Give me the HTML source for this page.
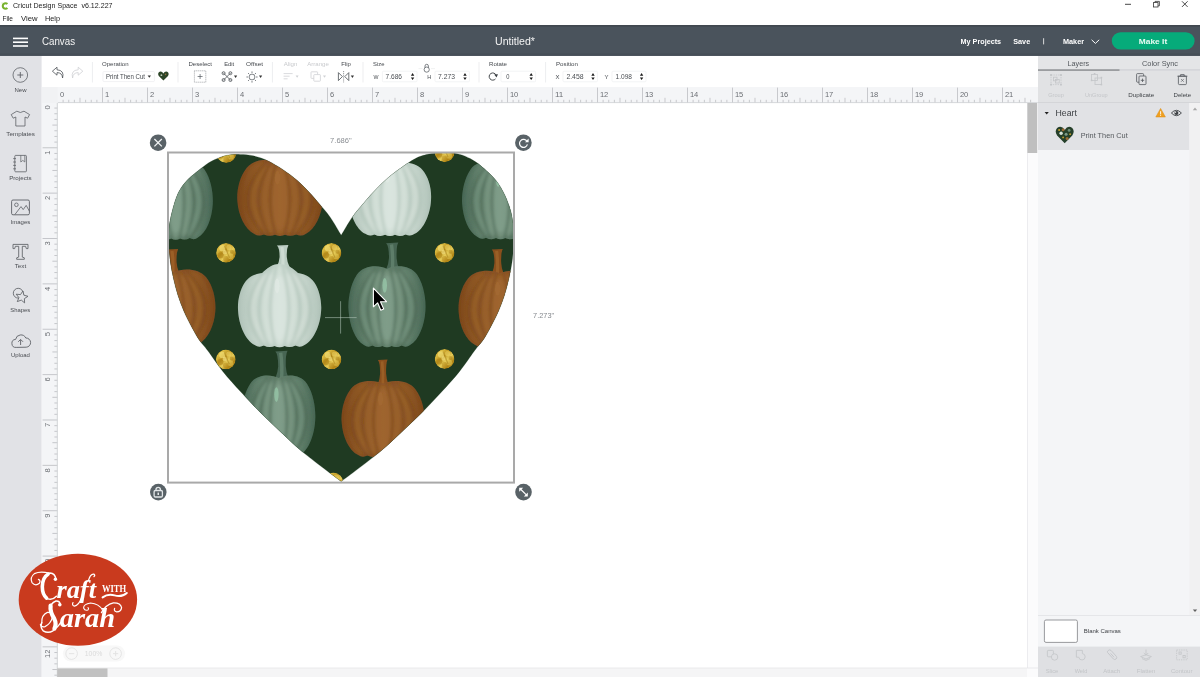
<!DOCTYPE html>
<html><head><meta charset="utf-8"><title>Cricut Design Space</title>
<style>
html,body{margin:0;padding:0;background:#fff;overflow:hidden}
body{width:1200px;height:677px;font-family:"Liberation Sans", sans-serif;}
svg{display:block;font-family:"Liberation Sans", sans-serif;will-change:transform;}
text{white-space:pre}
</style></head><body>
<svg width="1200" height="677" viewBox="0 0 1200 677">
<defs>
<clipPath id="hc"><path d="M341.2 235.2 C343.0 232.2 348.4 222.7 352.2 217.2 C356.0 211.7 359.9 207.4 364.2 202.4 C368.5 197.4 373.4 191.8 378.2 187.0 C383.0 182.2 387.3 178.2 393.2 173.6 C399.1 169.0 408.0 162.8 413.5 159.6 C419.0 156.4 422.2 155.7 426.2 154.6 C430.1 153.5 433.5 153.2 437.2 152.9 C440.9 152.6 444.4 152.3 448.2 152.6 C452.0 152.8 456.3 153.4 460.0 154.4 C463.7 155.4 466.7 156.7 470.2 158.6 C473.7 160.5 476.5 162.2 480.8 165.8 C485.1 169.4 492.0 175.5 496.0 180.4 C500.0 185.3 502.6 190.4 505.0 195.4 C507.4 200.4 509.3 206.1 510.6 210.5 C511.9 214.9 512.3 218.4 512.8 222.0 C513.3 225.6 513.5 228.0 513.6 232.0 C513.7 236.0 513.9 240.9 513.6 246.0 C513.3 251.1 512.8 257.0 512.0 262.5 C511.2 268.0 510.1 273.4 508.9 278.8 C507.7 284.2 506.3 289.6 504.6 295.0 C502.9 300.4 500.9 305.8 498.5 311.3 C496.1 316.8 492.8 323.2 490.2 328.0 C487.6 332.8 485.8 336.2 483.2 340.0 C480.6 343.8 478.5 345.5 474.6 350.7 C470.7 355.9 465.1 364.5 459.6 371.4 C454.1 378.3 447.8 385.1 441.5 392.0 C435.2 398.9 428.8 405.8 421.9 412.7 C415.0 419.6 407.6 426.5 400.2 433.4 C392.8 440.3 387.0 446.1 377.2 454.1 C367.4 462.1 347.2 477.0 341.2 481.6 L341.2 481.6 C335.2 477.0 315.0 462.1 305.2 454.1 C295.4 446.1 289.6 440.3 282.2 433.4 C274.8 426.5 267.4 419.6 260.5 412.7 C253.6 405.8 247.2 398.9 240.9 392.0 C234.6 385.1 228.3 378.3 222.8 371.4 C217.3 364.5 211.7 355.9 207.8 350.7 C203.9 345.5 201.8 343.8 199.2 340.0 C196.6 336.2 194.8 332.8 192.2 328.0 C189.6 323.2 186.3 316.8 183.9 311.3 C181.5 305.8 179.5 300.4 177.8 295.0 C176.1 289.6 174.7 284.2 173.5 278.8 C172.3 273.4 171.2 268.0 170.4 262.5 C169.6 257.0 169.1 251.1 168.8 246.0 C168.5 240.9 168.5 236.5 168.8 232.0 C169.1 227.5 169.1 224.8 170.4 218.9 C171.7 213.0 174.1 202.9 176.6 196.7 C179.1 190.5 181.3 186.8 185.6 181.9 C189.9 177.0 197.8 170.9 202.6 167.2 C207.4 163.5 210.1 161.8 214.2 159.8 C218.3 157.8 222.9 156.1 227.2 155.2 C231.5 154.3 235.9 154.3 240.2 154.4 C244.5 154.5 248.4 154.6 253.2 155.8 C258.0 157.0 263.2 158.4 269.2 161.4 C275.2 164.4 283.4 169.7 289.2 174.0 C295.0 178.3 299.4 182.3 304.2 187.0 C309.0 191.7 313.9 197.4 318.2 202.4 C322.5 207.4 326.4 211.7 330.2 217.2 C334.0 222.7 339.4 232.2 341.2 235.2 Z"/></clipPath>
<linearGradient id="gO" x1="0" x2="1" y1="0" y2="0"><stop offset="0" stop-color="#7f4a1c"/><stop offset=".22" stop-color="#8f5825"/><stop offset=".5" stop-color="#985f2a"/><stop offset=".78" stop-color="#8f5825"/><stop offset="1" stop-color="#7f4a1c"/></linearGradient>
<linearGradient id="gW" x1="0" x2="1" y1="0" y2="0"><stop offset="0" stop-color="#b3c5bb"/><stop offset=".22" stop-color="#c6d5cc"/><stop offset=".5" stop-color="#d2dfd7"/><stop offset=".78" stop-color="#c6d5cc"/><stop offset="1" stop-color="#b3c5bb"/></linearGradient>
<linearGradient id="gG" x1="0" x2="1" y1="0" y2="0"><stop offset="0" stop-color="#4c6a58"/><stop offset=".22" stop-color="#62806c"/><stop offset=".5" stop-color="#73907b"/><stop offset=".78" stop-color="#62806c"/><stop offset="1" stop-color="#4c6a58"/></linearGradient>
<linearGradient id="gold" x1="0" y1="0" x2="1" y2="1"><stop offset="0" stop-color="#b58a1a"/><stop offset=".22" stop-color="#dcbc42"/><stop offset=".4" stop-color="#bd9420"/><stop offset=".58" stop-color="#e6cc58"/><stop offset=".76" stop-color="#b08416"/><stop offset="1" stop-color="#cfa92e"/></linearGradient>
<filter id="soft" x="-10%" y="-10%" width="120%" height="120%"><feGaussianBlur stdDeviation="0.55"/></filter>
<filter id="soft2" x="-30%" y="-10%" width="160%" height="120%"><feGaussianBlur stdDeviation="1.7"/></filter>
<clipPath id="pk1"><path d="M175.7 164.2 C167.6 160.3 153.5 160.3 146.8 169.8 C139.8 180.1 138.0 195.1 138.7 204.5 C139.4 218.0 145.0 233.0 153.5 237.5 Q157.2 240.5 161.6 238.1 Q166.8 240.9 171.3 238.5 Q175.7 240.9 180.1 238.5 Q184.6 240.9 189.8 238.1 Q194.2 240.5 197.9 237.5 C206.4 233.0 212.0 218.0 212.7 204.5 C213.4 195.1 211.6 180.1 204.6 169.8 C197.9 160.3 183.8 160.3 175.7 164.2 Z"/></clipPath>
<clipPath id="pk2"><path d="M280.0 162.3 C270.6 158.4 254.4 158.4 246.8 167.7 C238.7 177.7 236.5 192.4 237.4 201.6 C238.3 214.8 244.6 229.4 254.4 233.9 Q258.7 236.8 263.8 234.4 Q269.8 237.1 274.9 234.8 Q280.0 237.1 285.1 234.8 Q290.2 237.1 296.2 234.4 Q301.3 236.8 305.6 233.9 C315.4 229.4 321.7 214.8 322.6 201.6 C323.5 192.4 321.3 177.7 313.2 167.7 C305.6 158.4 289.4 158.4 280.0 162.3 Z"/></clipPath>
<clipPath id="pk3"><path d="M390.0 154.0 C381.8 154.0 377.7 158.8 372.8 162.8 C366.2 163.6 359.7 166.0 355.6 172.4 C350.6 179.6 348.2 190.8 349.0 200.4 C349.8 214.0 356.0 229.2 365.4 233.8 Q369.5 236.8 374.4 234.4 Q380.2 237.2 385.1 234.8 Q390.0 237.2 394.9 234.8 Q399.8 237.2 405.6 234.4 Q410.5 236.8 414.6 233.8 C424.0 229.2 430.2 214.0 431.0 200.4 C431.8 190.8 429.4 179.6 424.4 172.4 C420.3 166.0 413.8 163.6 408.0 162.8 C403.1 158.8 398.2 154.0 390.0 154.0 Z"/></clipPath>
<clipPath id="pk4"><path d="M500.6 163.8 C492.2 159.9 477.6 159.9 470.6 169.4 C463.4 179.7 461.4 194.7 462.2 204.1 C463.0 217.6 468.7 232.6 477.6 237.1 Q481.4 240.1 486.0 237.7 Q491.4 240.5 496.0 238.1 Q500.6 240.5 505.2 238.1 Q509.8 240.5 515.2 237.7 Q519.8 240.1 523.6 237.1 C532.5 232.6 538.2 217.6 539.0 204.1 C539.8 194.7 537.8 179.7 530.6 169.4 C523.6 159.9 509.0 159.9 500.6 163.8 Z"/></clipPath>
<clipPath id="pk5"><path d="M174.0 271.9 C164.9 268.0 149.2 268.0 141.8 277.3 C133.9 287.3 131.9 302.0 132.7 311.2 C133.5 324.4 139.7 339.0 149.2 343.5 Q153.3 346.4 158.3 344.0 Q164.1 346.7 169.0 344.4 Q174.0 346.7 179.0 344.4 Q183.9 346.7 189.7 344.0 Q194.7 346.4 198.8 343.5 C208.3 339.0 214.5 324.4 215.3 311.2 C216.1 302.0 214.1 287.3 206.2 277.3 C198.8 268.0 183.1 268.0 174.0 271.9 Z"/></clipPath>
<clipPath id="pk6"><path d="M279.6 264.0 C271.3 264.0 267.2 268.8 262.2 272.9 C255.5 273.7 248.9 276.2 244.7 282.7 C239.8 290.0 237.3 301.3 238.1 311.1 C238.9 324.9 245.2 340.3 254.7 345.0 Q258.9 348.0 263.8 345.6 Q269.6 348.4 274.6 346.0 Q279.6 348.4 284.6 346.0 Q289.6 348.4 295.4 345.6 Q300.4 348.0 304.5 345.0 C314.0 340.3 320.3 324.9 321.1 311.1 C321.9 301.3 319.4 290.0 314.5 282.7 C310.3 276.2 303.7 273.7 297.9 272.9 C292.9 268.8 287.9 264.0 279.6 264.0 Z"/></clipPath>
<clipPath id="pk7"><path d="M387.0 268.9 C378.6 264.8 364.0 264.8 357.0 274.6 C349.8 285.3 347.8 300.9 348.6 310.7 C349.4 324.7 355.1 340.2 364.0 345.0 Q367.8 348.0 372.4 345.6 Q377.8 348.4 382.4 346.0 Q387.0 348.4 391.6 346.0 Q396.2 348.4 401.6 345.6 Q406.2 348.0 410.0 345.0 C418.9 340.2 424.6 324.7 425.4 310.7 C426.2 300.9 424.2 285.3 417.0 274.6 C410.0 264.8 395.4 264.8 387.0 268.9 Z"/></clipPath>
<clipPath id="pk8"><path d="M500.0 273.3 C490.9 269.4 475.2 269.4 467.8 278.7 C459.9 288.7 457.9 303.4 458.7 312.6 C459.5 325.8 465.7 340.4 475.2 344.9 Q479.4 347.8 484.3 345.4 Q490.1 348.1 495.0 345.8 Q500.0 348.1 505.0 345.8 Q509.9 348.1 515.7 345.4 Q520.6 347.8 524.8 344.9 C534.3 340.4 540.5 325.8 541.3 312.6 C542.1 303.4 540.1 288.7 532.2 278.7 C524.8 269.4 509.1 269.4 500.0 273.3 Z"/></clipPath>
<clipPath id="pk9"><path d="M278.6 378.1 C270.5 374.0 256.6 374.0 250.1 383.9 C243.1 394.6 241.3 410.3 242.0 420.1 C242.7 434.2 248.2 449.8 256.6 454.5 Q260.3 457.6 264.7 455.2 Q269.8 458.0 274.2 455.6 Q278.6 458.0 283.0 455.6 Q287.4 458.0 292.5 455.2 Q296.9 457.6 300.6 454.5 C309.0 449.8 314.5 434.2 315.2 420.1 C315.9 410.3 314.1 394.6 307.1 383.9 C300.6 374.0 286.7 374.0 278.6 378.1 Z"/></clipPath>
<clipPath id="pk10"><path d="M383.0 383.5 C373.9 379.6 358.2 379.6 350.8 388.9 C342.9 398.9 340.9 413.6 341.7 422.8 C342.5 436.0 348.7 450.6 358.2 455.1 Q362.4 458.0 367.3 455.6 Q373.1 458.3 378.0 456.0 Q383.0 458.3 388.0 456.0 Q392.9 458.3 398.7 455.6 Q403.6 458.0 407.8 455.1 C417.3 450.6 423.5 436.0 424.3 422.8 C425.1 413.6 423.1 398.9 415.2 388.9 C407.8 379.6 392.1 379.6 383.0 383.5 Z"/></clipPath>
<clipPath id="dc11"><circle cx="226.2" cy="152.8" r="10.2"/></clipPath>
<clipPath id="dc12"><circle cx="444.6" cy="152.2" r="10"/></clipPath>
<clipPath id="dc13"><circle cx="226" cy="252.8" r="9.9"/></clipPath>
<clipPath id="dc14"><circle cx="331.5" cy="252.8" r="9.9"/></clipPath>
<clipPath id="dc15"><circle cx="444.6" cy="252.8" r="9.9"/></clipPath>
<clipPath id="dc16"><circle cx="225.8" cy="359.4" r="9.9"/></clipPath>
<clipPath id="dc17"><circle cx="331.5" cy="359.4" r="9.9"/></clipPath>
<clipPath id="dc18"><circle cx="444.6" cy="359" r="9.9"/></clipPath>
<clipPath id="dc19"><circle cx="333.4" cy="482.6" r="10"/></clipPath>
</defs>
<rect x="0" y="0" width="1200" height="677" fill="#ffffff" />
<path d="M7.4 4.1 A2.7 2.7 0 1 0 7.4 7.9" fill="none" stroke="#78b22c" stroke-width="2.1" stroke-linecap="butt"/><path d="M1.4 2.4 l1.6 0.4 l-1 1" fill="#a9d36b" opacity=".7"/>
<text x="13.0" y="7.9" font-size="7.6" fill="#222" font-weight="normal" text-anchor="start" textLength="99.5" lengthAdjust="spacingAndGlyphs" >Cricut Design Space  v6.12.227</text>
<text x="2.5" y="21.3" font-size="7.6" fill="#222" font-weight="normal" text-anchor="start" textLength="10.5" lengthAdjust="spacingAndGlyphs" >File</text>
<text x="21.0" y="21.3" font-size="7.6" fill="#222" font-weight="normal" text-anchor="start" textLength="16.5" lengthAdjust="spacingAndGlyphs" >View</text>
<text x="45.0" y="21.3" font-size="7.6" fill="#222" font-weight="normal" text-anchor="start" textLength="15.0" lengthAdjust="spacingAndGlyphs" >Help</text>
<path d="M1125 4.3 h6" stroke="#333" stroke-width="0.9"/>
<rect x="1153.6" y="2.6" width="4.4" height="4.4" fill="none" stroke="#333" stroke-width="0.8"/><path d="M1155 2.6 v-1.2 h4.4 v4.4 h-1.3" fill="none" stroke="#333" stroke-width="0.8"/>
<path d="M1182 1.3 l5.6 5.6 M1187.6 1.3 l-5.6 5.6" stroke="#333" stroke-width="0.9"/>
<rect x="0" y="25" width="1200" height="30.8" fill="#4a535c" />
<rect x="0" y="25" width="1200" height="1.6" fill="#40474f"/><rect x="0" y="53.4" width="1200" height="2.4" fill="#464e57"/>
<rect x="13" y="37.6" width="15" height="1.6" fill="#fff"/>
<rect x="13" y="41.400000000000006" width="15" height="1.6" fill="#fff"/>
<rect x="13" y="45.2" width="15" height="1.6" fill="#fff"/>
<text x="42.0" y="44.8" font-size="10" fill="#f4f4f4" font-weight="normal" text-anchor="start" textLength="33.0" lengthAdjust="spacingAndGlyphs" >Canvas</text>
<text x="495.0" y="44.8" font-size="10" fill="#f4f4f4" font-weight="normal" text-anchor="start" textLength="40.0" lengthAdjust="spacingAndGlyphs" >Untitled*</text>
<text x="960.6" y="43.9" font-size="7.6" fill="#fff" font-weight="bold" text-anchor="start" textLength="40.5" lengthAdjust="spacingAndGlyphs" >My Projects</text>
<text x="1013.2" y="43.9" font-size="7.6" fill="#fff" font-weight="bold" text-anchor="start" textLength="17.0" lengthAdjust="spacingAndGlyphs" >Save</text>
<rect x="1043.2" y="38.2" width="0.9" height="6.2" fill="#e8e8e8" />
<text x="1063.0" y="43.9" font-size="7.6" fill="#fff" font-weight="bold" text-anchor="start" textLength="21.0" lengthAdjust="spacingAndGlyphs" >Maker</text>
<path d="M1091.6 39.8 l3.8 3.6 l3.8 -3.6" fill="none" stroke="#fff" stroke-width="1"/>
<rect x="1111.8" y="32.2" width="82.8" height="17.4" rx="8.7" fill="#06ab7a"/>
<text x="1153.0" y="44.0" font-size="7.8" fill="#eafcf4" font-weight="bold" text-anchor="middle" textLength="28.4" lengthAdjust="spacingAndGlyphs" >Make It</text>
<rect x="0" y="56" width="41.6" height="621" fill="#e1e2e6" />
<circle cx="20.3" cy="75" r="7.3" fill="none" stroke="#5d6166" stroke-width="0.8"/>
<path d="M17.3 75 h6 M20.3 72 v6" stroke="#5d6166" stroke-width="0.9"/>
<text x="20.5" y="91.5" font-size="5.4" fill="#4a4d52" font-weight="normal" text-anchor="middle" textLength="12.0" lengthAdjust="spacingAndGlyphs" >New</text>
<path d="M16.8 111.2 q3.6 2.6 7.2 0 l5.6 3.4 l-2 3.6 l-2.6 -1.2 v9 h-9.2 v-9 l-2.6 1.2 l-2 -3.6 z" fill="none" stroke="#5d6166" stroke-width="0.8" stroke-linejoin="round"/>
<text x="20.6" y="135.9" font-size="5.4" fill="#4a4d52" font-weight="normal" text-anchor="middle" textLength="28.6" lengthAdjust="spacingAndGlyphs" >Templates</text>
<rect x="14.8" y="155.4" width="11.6" height="16.4" rx="0.8" fill="none" stroke="#5d6166" stroke-width="0.8"/>
<path d="M20.8 155.4 v6.6 l2 -1.6 l2 1.6 v-6.6" fill="none" stroke="#5d6166" stroke-width="0.7"/>
<path d="M13.2 158.6 h2.8" stroke="#5d6166" stroke-width="0.8"/>
<path d="M13.2 162 h2.8" stroke="#5d6166" stroke-width="0.8"/>
<path d="M13.2 165.4 h2.8" stroke="#5d6166" stroke-width="0.8"/>
<path d="M13.2 168.8 h2.8" stroke="#5d6166" stroke-width="0.8"/>
<text x="20.4" y="179.7" font-size="5.4" fill="#4a4d52" font-weight="normal" text-anchor="middle" textLength="22.5" lengthAdjust="spacingAndGlyphs" >Projects</text>
<rect x="11.6" y="200" width="17.8" height="14.8" rx="1.4" fill="none" stroke="#5d6166" stroke-width="0.9"/>
<circle cx="16.4" cy="204.8" r="1.8" fill="none" stroke="#5d6166" stroke-width="0.8"/>
<path d="M14.8 214.6 L21 206.6 L23.2 209.6 L26.2 205.4 L29.4 211.2" fill="none" stroke="#5d6166" stroke-width="0.8" stroke-linejoin="round"/>
<text x="20.4" y="224.3" font-size="5.6" fill="#4a4d52" font-weight="normal" text-anchor="middle" textLength="19.8" lengthAdjust="spacingAndGlyphs" >Images</text>
<path d="M13 244.4 h15 v4.2 h-1.7 l-0.7 -2.3 h-3.3 v10.8 l2 0.7 v1.5 h-7.6 v-1.5 l2 -0.7 v-10.8 h-3.3 l-0.7 2.3 h-1.7 z" fill="none" stroke="#5d6166" stroke-width="0.85" stroke-linejoin="round"/>
<text x="20.4" y="268.2" font-size="5.6" fill="#4a4d52" font-weight="normal" text-anchor="middle" textLength="11.5" lengthAdjust="spacingAndGlyphs" >Text</text>
<circle cx="18.2" cy="293.2" r="4.9" fill="none" stroke="#5d6166" stroke-width="0.85"/>
<path d="M22.9 291.0 L23.9 295.2 L28.0 296.3 L24.4 298.6 L24.6 302.9 L21.3 300.1 L17.3 301.6 L18.9 297.6 L16.2 294.2 L20.5 294.6 Z" fill="#e1e2e6" stroke="#5d6166" stroke-width="0.85" stroke-linejoin="round"/>
<text x="20.3" y="312.4" font-size="5.6" fill="#4a4d52" font-weight="normal" text-anchor="middle" textLength="20.0" lengthAdjust="spacingAndGlyphs" >Shapes</text>
<path d="M16.2 347.4 a4 4 0 0 1 -0.6 -8 a5.4 5.4 0 0 1 10.2 -1.4 a4.6 4.6 0 0 1 0.4 9.2 z" fill="none" stroke="#5d6166" stroke-width="0.9" stroke-linejoin="round"/>
<path d="M20.6 345 v-5.2 M18.2 341.8 l2.4 -2.4 l2.4 2.4" fill="none" stroke="#5d6166" stroke-width="0.9"/>
<text x="20.4" y="356.8" font-size="5.6" fill="#4a4d52" font-weight="normal" text-anchor="middle" textLength="19.0" lengthAdjust="spacingAndGlyphs" >Upload</text>
<rect x="42" y="56" width="996" height="31" fill="#ffffff" />
<rect x="91.9" y="62" width="1" height="20.5" fill="#edeef0" />
<rect x="177.5" y="62" width="1" height="20.5" fill="#edeef0" />
<rect x="271.9" y="62" width="1" height="20.5" fill="#edeef0" />
<rect x="362.5" y="62" width="1" height="20.5" fill="#edeef0" />
<rect x="478.5" y="62" width="1" height="20.5" fill="#edeef0" />
<rect x="545.1" y="62" width="1" height="20.5" fill="#edeef0" />
<path d="M62.6 76.4 q-0.4 -5.4 -5.6 -5.4 v2.6 l-4.6 -4 l4.6 -4 v2.6 q7.6 0.4 5.6 8.2 z" fill="none" stroke="#4b5056" stroke-width="0.8" stroke-linejoin="round" transform="translate(0 1.6)"/>
<path d="M72.6 76.4 q0.4 -5.4 5.6 -5.4 v2.6 l4.6 -4 l-4.6 -4 v2.6 q-7.6 0.4 -5.6 8.2 z" fill="none" stroke="#cfd1d4" stroke-width="0.8" stroke-linejoin="round" transform="translate(0 1.6)"/>
<text x="102.0" y="66.3" font-size="5.6" fill="#45494e" font-weight="normal" text-anchor="start" textLength="26.6" lengthAdjust="spacingAndGlyphs" >Operation</text>
<rect x="103" y="71.6" width="51.4" height="10" rx="1" fill="#fff" stroke="#ecedef" stroke-width="0.7"/>
<text x="106.0" y="79.0" font-size="6.6" fill="#45494e" font-weight="normal" text-anchor="start" textLength="39.0" lengthAdjust="spacingAndGlyphs" >Print Then Cut</text>
<path d="M147.6 75.4 h3.4 l-1.7 2.4 z" fill="#333"/>
<path d="M163.4 80.6 l-4.6 -4.6 q-1.6 -2.8 0.8 -4.2 q2.4 -0.8 3.8 1.8 q1.4 -2.6 3.8 -1.8 q2.4 1.4 0.8 4.2 z" fill="#2c4527"/>
<circle cx="161.4" cy="75.2" r="0.9" fill="#b9c7b5"/><circle cx="165.6" cy="74.4" r="0.8" fill="#8a6a3a"/>
<text x="200.2" y="66.3" font-size="5.6" fill="#45494e" font-weight="normal" text-anchor="middle" textLength="23.6" lengthAdjust="spacingAndGlyphs" >Deselect</text>
<rect x="194.4" y="70.8" width="11.4" height="11.4" fill="none" stroke="#7d8288" stroke-width="0.8" stroke-dasharray="0.9 1.1"/>
<path d="M197.6 76.5 h5 M200.1 74 v5" stroke="#555a60" stroke-width="0.7"/>
<text x="229.2" y="66.3" font-size="5.6" fill="#45494e" font-weight="normal" text-anchor="middle" textLength="10.0" lengthAdjust="spacingAndGlyphs" >Edit</text>
<g stroke="#4b5056" stroke-width="0.8" fill="none"><path d="M223 72.6 l8 8 M231 72.6 l-8 8"/><circle cx="223.6" cy="73.2" r="1.5"/><circle cx="230.4" cy="73.2" r="1.5"/><circle cx="223.6" cy="80" r="1.5"/><circle cx="230.4" cy="80" r="1.5"/></g>
<path d="M234 75.6 h3.2 l-1.6 2.3 z" fill="#333"/>
<text x="254.6" y="66.3" font-size="5.6" fill="#45494e" font-weight="normal" text-anchor="middle" textLength="17.0" lengthAdjust="spacingAndGlyphs" >Offset</text>
<g stroke="#4b5056" stroke-width="0.7" fill="none"><circle cx="252" cy="77" r="2.9"/><path d="M252 71.4 v1.6 M252 81 v1.6 M246.4 77 h1.6 M256 77 h1.6 M248 73 l1.2 1.2 M254.8 79.8 l1.2 1.2 M256 73 l-1.2 1.2 M249.2 79.8 l-1.2 1.2"/></g>
<path d="M259 75.6 h3.2 l-1.6 2.3 z" fill="#333"/>
<text x="290.6" y="66.3" font-size="5.6" fill="#c8cacd" font-weight="normal" text-anchor="middle" textLength="13.6" lengthAdjust="spacingAndGlyphs" >Align</text>
<g stroke="#cfd1d4" stroke-width="0.8" fill="none"><path d="M283.6 73.6 h9 M283.6 76.2 h6 M283.6 78.8 h4"/></g>
<path d="M295.6 75.6 h3 l-1.5 2.2 z" fill="#cfd1d4"/>
<text x="318.0" y="66.3" font-size="5.6" fill="#c8cacd" font-weight="normal" text-anchor="middle" textLength="21.6" lengthAdjust="spacingAndGlyphs" >Arrange</text>
<g stroke="#cfd1d4" stroke-width="0.8" fill="none"><rect x="311" y="71.8" width="6.6" height="6.6" rx="0.6"/><rect x="313.8" y="74.6" width="6.6" height="6.6" rx="0.6" fill="#fff"/></g>
<path d="M323 75.6 h3 l-1.5 2.2 z" fill="#cfd1d4"/>
<text x="346.0" y="66.3" font-size="5.6" fill="#45494e" font-weight="normal" text-anchor="middle" textLength="9.6" lengthAdjust="spacingAndGlyphs" >Flip</text>
<g stroke="#4b5056" stroke-width="0.8" fill="none" stroke-linejoin="round"><path d="M338.4 72.6 v8 l4 -4 z M348.8 72.6 v8 l-4 -4 z"/><path d="M343.6 71 v11.4" stroke-dasharray="1.2 0.9" stroke-width="0.6"/></g>
<path d="M350.8 75.6 h3.2 l-1.6 2.3 z" fill="#333"/>
<text x="373.0" y="66.3" font-size="5.6" fill="#45494e" font-weight="normal" text-anchor="start" textLength="11.4" lengthAdjust="spacingAndGlyphs" >Size</text>
<text x="373.4" y="78.6" font-size="6" fill="#45494e" font-weight="normal" text-anchor="start" textLength="5.0" lengthAdjust="spacingAndGlyphs" >W</text>
<rect x="382.4" y="71.2" width="34.6" height="10.6" rx="1" fill="#fff" stroke="#eeeff1" stroke-width="0.7"/>
<text x="385.6" y="79.3" font-size="7.4" fill="#4a4e53" font-weight="normal" text-anchor="start" textLength="16.4" lengthAdjust="spacingAndGlyphs" >7.686</text>
<path d="M410.9 75.7 h3.4 l-1.7 -2.6 z M410.9 77.5 h3.4 l-1.7 2.6 z" fill="#1c1c1c"/>
<text x="427.2" y="78.6" font-size="6" fill="#45494e" font-weight="normal" text-anchor="start" textLength="4.0" lengthAdjust="spacingAndGlyphs" >H</text>
<rect x="435" y="71.2" width="34.4" height="10.6" rx="1" fill="#fff" stroke="#eeeff1" stroke-width="0.7"/>
<text x="438.0" y="79.3" font-size="7.4" fill="#4a4e53" font-weight="normal" text-anchor="start" textLength="17.0" lengthAdjust="spacingAndGlyphs" >7.273</text>
<path d="M463.3 75.7 h3.4 l-1.7 -2.6 z M463.3 77.5 h3.4 l-1.7 2.6 z" fill="#1c1c1c"/>
<g stroke="#4b5056" stroke-width="0.7" fill="none"><path d="M425 67.6 v-1.6 a1.7 1.7 0 0 1 3.4 0 v1.6"/><circle cx="426.7" cy="69.6" r="2.6"/></g>
<path d="M418.5 68.6 h4 M431 68.6 h4" stroke="#e6e7ea" stroke-width="0.6"/>
<text x="489.0" y="66.3" font-size="5.6" fill="#45494e" font-weight="normal" text-anchor="start" textLength="18.0" lengthAdjust="spacingAndGlyphs" >Rotate</text>
<path d="M495.5 78.9 A3.6 3.6 0 1 1 496.1 75.2" fill="none" stroke="#3d4146" stroke-width="0.95"/><path d="M494.2 74.6 L498 74.2 L496.5 77.6 Z" fill="#3d4146"/>
<rect x="501" y="71.2" width="34.6" height="10.6" rx="1" fill="#fff" stroke="#eeeff1" stroke-width="0.7"/>
<text x="506.2" y="79.3" font-size="7.4" fill="#4a4e53" font-weight="normal" text-anchor="start" textLength="3.2" lengthAdjust="spacingAndGlyphs" >0</text>
<path d="M529.5 75.7 h3.4 l-1.7 -2.6 z M529.5 77.5 h3.4 l-1.7 2.6 z" fill="#1c1c1c"/>
<text x="556.0" y="66.3" font-size="5.6" fill="#45494e" font-weight="normal" text-anchor="start" textLength="22.0" lengthAdjust="spacingAndGlyphs" >Position</text>
<text x="555.4" y="78.6" font-size="6" fill="#45494e" font-weight="normal" text-anchor="start" textLength="4.0" lengthAdjust="spacingAndGlyphs" >X</text>
<rect x="563" y="71.2" width="34.4" height="10.6" rx="1" fill="#fff" stroke="#eeeff1" stroke-width="0.7"/>
<text x="566.4" y="79.3" font-size="7.4" fill="#4a4e53" font-weight="normal" text-anchor="start" textLength="17.2" lengthAdjust="spacingAndGlyphs" >2.458</text>
<path d="M591.3 75.7 h3.4 l-1.7 -2.6 z M591.3 77.5 h3.4 l-1.7 2.6 z" fill="#1c1c1c"/>
<text x="604.6" y="78.6" font-size="6" fill="#45494e" font-weight="normal" text-anchor="start" textLength="4.0" lengthAdjust="spacingAndGlyphs" >Y</text>
<rect x="612" y="71.2" width="34" height="10.6" rx="1" fill="#fff" stroke="#eeeff1" stroke-width="0.7"/>
<text x="615.6" y="79.3" font-size="7.4" fill="#4a4e53" font-weight="normal" text-anchor="start" textLength="16.4" lengthAdjust="spacingAndGlyphs" >1.098</text>
<path d="M639.9 75.7 h3.4 l-1.7 -2.6 z M639.9 77.5 h3.4 l-1.7 2.6 z" fill="#1c1c1c"/>
<rect x="42" y="87" width="996" height="16" fill="#f4f5f7" />
<rect x="42" y="87" width="15.6" height="590" fill="#f4f5f7" />
<rect x="42" y="87" width="15.6" height="16" fill="#f1f2f4" />
<path d="M63.12 99.8 V103 M68.75 99.8 V103 M74.38 99.8 V103 M80.00 97.8 V103 M85.62 99.8 V103 M91.25 99.8 V103 M96.88 99.8 V103 M102.50 87.6 V103 M108.12 99.8 V103 M113.75 99.8 V103 M119.38 99.8 V103 M125.00 97.8 V103 M130.62 99.8 V103 M136.25 99.8 V103 M141.88 99.8 V103 M147.50 87.6 V103 M153.12 99.8 V103 M158.75 99.8 V103 M164.38 99.8 V103 M170.00 97.8 V103 M175.62 99.8 V103 M181.25 99.8 V103 M186.88 99.8 V103 M192.50 87.6 V103 M198.12 99.8 V103 M203.75 99.8 V103 M209.38 99.8 V103 M215.00 97.8 V103 M220.62 99.8 V103 M226.25 99.8 V103 M231.88 99.8 V103 M237.50 87.6 V103 M243.12 99.8 V103 M248.75 99.8 V103 M254.38 99.8 V103 M260.00 97.8 V103 M265.62 99.8 V103 M271.25 99.8 V103 M276.88 99.8 V103 M282.50 87.6 V103 M288.12 99.8 V103 M293.75 99.8 V103 M299.38 99.8 V103 M305.00 97.8 V103 M310.62 99.8 V103 M316.25 99.8 V103 M321.88 99.8 V103 M327.50 87.6 V103 M333.12 99.8 V103 M338.75 99.8 V103 M344.38 99.8 V103 M350.00 97.8 V103 M355.62 99.8 V103 M361.25 99.8 V103 M366.88 99.8 V103 M372.50 87.6 V103 M378.12 99.8 V103 M383.75 99.8 V103 M389.38 99.8 V103 M395.00 97.8 V103 M400.62 99.8 V103 M406.25 99.8 V103 M411.88 99.8 V103 M417.50 87.6 V103 M423.12 99.8 V103 M428.75 99.8 V103 M434.38 99.8 V103 M440.00 97.8 V103 M445.62 99.8 V103 M451.25 99.8 V103 M456.88 99.8 V103 M462.50 87.6 V103 M468.12 99.8 V103 M473.75 99.8 V103 M479.38 99.8 V103 M485.00 97.8 V103 M490.62 99.8 V103 M496.25 99.8 V103 M501.88 99.8 V103 M507.50 87.6 V103 M513.12 99.8 V103 M518.75 99.8 V103 M524.38 99.8 V103 M530.00 97.8 V103 M535.62 99.8 V103 M541.25 99.8 V103 M546.88 99.8 V103 M552.50 87.6 V103 M558.12 99.8 V103 M563.75 99.8 V103 M569.38 99.8 V103 M575.00 97.8 V103 M580.62 99.8 V103 M586.25 99.8 V103 M591.88 99.8 V103 M597.50 87.6 V103 M603.12 99.8 V103 M608.75 99.8 V103 M614.38 99.8 V103 M620.00 97.8 V103 M625.62 99.8 V103 M631.25 99.8 V103 M636.88 99.8 V103 M642.50 87.6 V103 M648.12 99.8 V103 M653.75 99.8 V103 M659.38 99.8 V103 M665.00 97.8 V103 M670.62 99.8 V103 M676.25 99.8 V103 M681.88 99.8 V103 M687.50 87.6 V103 M693.12 99.8 V103 M698.75 99.8 V103 M704.38 99.8 V103 M710.00 97.8 V103 M715.62 99.8 V103 M721.25 99.8 V103 M726.88 99.8 V103 M732.50 87.6 V103 M738.12 99.8 V103 M743.75 99.8 V103 M749.38 99.8 V103 M755.00 97.8 V103 M760.62 99.8 V103 M766.25 99.8 V103 M771.88 99.8 V103 M777.50 87.6 V103 M783.12 99.8 V103 M788.75 99.8 V103 M794.38 99.8 V103 M800.00 97.8 V103 M805.62 99.8 V103 M811.25 99.8 V103 M816.88 99.8 V103 M822.50 87.6 V103 M828.12 99.8 V103 M833.75 99.8 V103 M839.38 99.8 V103 M845.00 97.8 V103 M850.62 99.8 V103 M856.25 99.8 V103 M861.88 99.8 V103 M867.50 87.6 V103 M873.12 99.8 V103 M878.75 99.8 V103 M884.38 99.8 V103 M890.00 97.8 V103 M895.62 99.8 V103 M901.25 99.8 V103 M906.88 99.8 V103 M912.50 87.6 V103 M918.12 99.8 V103 M923.75 99.8 V103 M929.38 99.8 V103 M935.00 97.8 V103 M940.62 99.8 V103 M946.25 99.8 V103 M951.88 99.8 V103 M957.50 87.6 V103 M963.12 99.8 V103 M968.75 99.8 V103 M974.38 99.8 V103 M980.00 97.8 V103 M985.62 99.8 V103 M991.25 99.8 V103 M996.88 99.8 V103 M1002.50 87.6 V103 M1008.12 99.8 V103 M1013.75 99.8 V103 M1019.38 99.8 V103 M1025.00 97.8 V103 M1030.62 99.8 V103" stroke="#bfc1c5" stroke-width="0.85" fill="none"/>
<text x="59.9" y="96.7" font-size="8" fill="#6b6e73" font-weight="normal" text-anchor="start" textLength="4.2" lengthAdjust="spacingAndGlyphs" >0</text>
<text x="104.9" y="96.7" font-size="8" fill="#6b6e73" font-weight="normal" text-anchor="start" textLength="4.2" lengthAdjust="spacingAndGlyphs" >1</text>
<text x="149.9" y="96.7" font-size="8" fill="#6b6e73" font-weight="normal" text-anchor="start" textLength="4.2" lengthAdjust="spacingAndGlyphs" >2</text>
<text x="194.9" y="96.7" font-size="8" fill="#6b6e73" font-weight="normal" text-anchor="start" textLength="4.2" lengthAdjust="spacingAndGlyphs" >3</text>
<text x="239.9" y="96.7" font-size="8" fill="#6b6e73" font-weight="normal" text-anchor="start" textLength="4.2" lengthAdjust="spacingAndGlyphs" >4</text>
<text x="284.9" y="96.7" font-size="8" fill="#6b6e73" font-weight="normal" text-anchor="start" textLength="4.2" lengthAdjust="spacingAndGlyphs" >5</text>
<text x="329.9" y="96.7" font-size="8" fill="#6b6e73" font-weight="normal" text-anchor="start" textLength="4.2" lengthAdjust="spacingAndGlyphs" >6</text>
<text x="374.9" y="96.7" font-size="8" fill="#6b6e73" font-weight="normal" text-anchor="start" textLength="4.2" lengthAdjust="spacingAndGlyphs" >7</text>
<text x="419.9" y="96.7" font-size="8" fill="#6b6e73" font-weight="normal" text-anchor="start" textLength="4.2" lengthAdjust="spacingAndGlyphs" >8</text>
<text x="464.9" y="96.7" font-size="8" fill="#6b6e73" font-weight="normal" text-anchor="start" textLength="4.2" lengthAdjust="spacingAndGlyphs" >9</text>
<text x="509.9" y="96.7" font-size="8" fill="#6b6e73" font-weight="normal" text-anchor="start" textLength="8.4" lengthAdjust="spacingAndGlyphs" >10</text>
<text x="554.9" y="96.7" font-size="8" fill="#6b6e73" font-weight="normal" text-anchor="start" textLength="8.4" lengthAdjust="spacingAndGlyphs" >11</text>
<text x="599.9" y="96.7" font-size="8" fill="#6b6e73" font-weight="normal" text-anchor="start" textLength="8.4" lengthAdjust="spacingAndGlyphs" >12</text>
<text x="644.9" y="96.7" font-size="8" fill="#6b6e73" font-weight="normal" text-anchor="start" textLength="8.4" lengthAdjust="spacingAndGlyphs" >13</text>
<text x="689.9" y="96.7" font-size="8" fill="#6b6e73" font-weight="normal" text-anchor="start" textLength="8.4" lengthAdjust="spacingAndGlyphs" >14</text>
<text x="734.9" y="96.7" font-size="8" fill="#6b6e73" font-weight="normal" text-anchor="start" textLength="8.4" lengthAdjust="spacingAndGlyphs" >15</text>
<text x="779.9" y="96.7" font-size="8" fill="#6b6e73" font-weight="normal" text-anchor="start" textLength="8.4" lengthAdjust="spacingAndGlyphs" >16</text>
<text x="824.9" y="96.7" font-size="8" fill="#6b6e73" font-weight="normal" text-anchor="start" textLength="8.4" lengthAdjust="spacingAndGlyphs" >17</text>
<text x="869.9" y="96.7" font-size="8" fill="#6b6e73" font-weight="normal" text-anchor="start" textLength="8.4" lengthAdjust="spacingAndGlyphs" >18</text>
<text x="914.9" y="96.7" font-size="8" fill="#6b6e73" font-weight="normal" text-anchor="start" textLength="8.4" lengthAdjust="spacingAndGlyphs" >19</text>
<text x="959.9" y="96.7" font-size="8" fill="#6b6e73" font-weight="normal" text-anchor="start" textLength="8.4" lengthAdjust="spacingAndGlyphs" >20</text>
<text x="1004.9" y="96.7" font-size="8" fill="#6b6e73" font-weight="normal" text-anchor="start" textLength="8.4" lengthAdjust="spacingAndGlyphs" >21</text>
<path d="M54.4 108.07 H57.6 M54.4 113.74 H57.6 M54.4 119.41 H57.6 M52.4 125.09 H57.6 M54.4 130.76 H57.6 M54.4 136.43 H57.6 M54.4 142.10 H57.6 M42.6 147.77 H57.6 M54.4 153.44 H57.6 M54.4 159.11 H57.6 M54.4 164.78 H57.6 M52.4 170.46 H57.6 M54.4 176.13 H57.6 M54.4 181.80 H57.6 M54.4 187.47 H57.6 M42.6 193.14 H57.6 M54.4 198.81 H57.6 M54.4 204.48 H57.6 M54.4 210.15 H57.6 M52.4 215.82 H57.6 M54.4 221.50 H57.6 M54.4 227.17 H57.6 M54.4 232.84 H57.6 M42.6 238.51 H57.6 M54.4 244.18 H57.6 M54.4 249.85 H57.6 M54.4 255.52 H57.6 M52.4 261.19 H57.6 M54.4 266.87 H57.6 M54.4 272.54 H57.6 M54.4 278.21 H57.6 M42.6 283.88 H57.6 M54.4 289.55 H57.6 M54.4 295.22 H57.6 M54.4 300.89 H57.6 M52.4 306.56 H57.6 M54.4 312.24 H57.6 M54.4 317.91 H57.6 M54.4 323.58 H57.6 M42.6 329.25 H57.6 M54.4 334.92 H57.6 M54.4 340.59 H57.6 M54.4 346.26 H57.6 M52.4 351.94 H57.6 M54.4 357.61 H57.6 M54.4 363.28 H57.6 M54.4 368.95 H57.6 M42.6 374.62 H57.6 M54.4 380.29 H57.6 M54.4 385.96 H57.6 M54.4 391.63 H57.6 M52.4 397.31 H57.6 M54.4 402.98 H57.6 M54.4 408.65 H57.6 M54.4 414.32 H57.6 M42.6 419.99 H57.6 M54.4 425.66 H57.6 M54.4 431.33 H57.6 M54.4 437.00 H57.6 M52.4 442.68 H57.6 M54.4 448.35 H57.6 M54.4 454.02 H57.6 M54.4 459.69 H57.6 M42.6 465.36 H57.6 M54.4 471.03 H57.6 M54.4 476.70 H57.6 M54.4 482.37 H57.6 M52.4 488.05 H57.6 M54.4 493.72 H57.6 M54.4 499.39 H57.6 M54.4 505.06 H57.6 M42.6 510.73 H57.6 M54.4 516.40 H57.6 M54.4 522.07 H57.6 M54.4 527.74 H57.6 M52.4 533.41 H57.6 M54.4 539.09 H57.6 M54.4 544.76 H57.6 M54.4 550.43 H57.6 M42.6 556.10 H57.6 M54.4 561.77 H57.6 M54.4 567.44 H57.6 M54.4 573.11 H57.6 M52.4 578.78 H57.6 M54.4 584.46 H57.6 M54.4 590.13 H57.6 M54.4 595.80 H57.6 M42.6 601.47 H57.6 M54.4 607.14 H57.6 M54.4 612.81 H57.6 M54.4 618.48 H57.6 M52.4 624.15 H57.6 M54.4 629.83 H57.6 M54.4 635.50 H57.6 M54.4 641.17 H57.6 M42.6 646.84 H57.6 M54.4 652.51 H57.6 M54.4 658.18 H57.6 M54.4 663.85 H57.6 M52.4 669.52 H57.6 M54.4 675.20 H57.6" stroke="#bfc1c5" stroke-width="0.9" fill="none"/>
<text transform="translate(49.7 109.4) rotate(-90)" font-size="8" fill="#6b6e73" textLength="4.2" lengthAdjust="spacingAndGlyphs">0</text>
<text transform="translate(49.7 154.8) rotate(-90)" font-size="8" fill="#6b6e73" textLength="4.2" lengthAdjust="spacingAndGlyphs">1</text>
<text transform="translate(49.7 200.1) rotate(-90)" font-size="8" fill="#6b6e73" textLength="4.2" lengthAdjust="spacingAndGlyphs">2</text>
<text transform="translate(49.7 245.5) rotate(-90)" font-size="8" fill="#6b6e73" textLength="4.2" lengthAdjust="spacingAndGlyphs">3</text>
<text transform="translate(49.7 290.9) rotate(-90)" font-size="8" fill="#6b6e73" textLength="4.2" lengthAdjust="spacingAndGlyphs">4</text>
<text transform="translate(49.7 336.2) rotate(-90)" font-size="8" fill="#6b6e73" textLength="4.2" lengthAdjust="spacingAndGlyphs">5</text>
<text transform="translate(49.7 381.6) rotate(-90)" font-size="8" fill="#6b6e73" textLength="4.2" lengthAdjust="spacingAndGlyphs">6</text>
<text transform="translate(49.7 427.0) rotate(-90)" font-size="8" fill="#6b6e73" textLength="4.2" lengthAdjust="spacingAndGlyphs">7</text>
<text transform="translate(49.7 472.4) rotate(-90)" font-size="8" fill="#6b6e73" textLength="4.2" lengthAdjust="spacingAndGlyphs">8</text>
<text transform="translate(49.7 517.7) rotate(-90)" font-size="8" fill="#6b6e73" textLength="4.2" lengthAdjust="spacingAndGlyphs">9</text>
<text transform="translate(49.7 567.3) rotate(-90)" font-size="8" fill="#6b6e73" textLength="8.4" lengthAdjust="spacingAndGlyphs">10</text>
<text transform="translate(49.7 612.7) rotate(-90)" font-size="8" fill="#6b6e73" textLength="8.4" lengthAdjust="spacingAndGlyphs">11</text>
<text transform="translate(49.7 658.0) rotate(-90)" font-size="8" fill="#6b6e73" textLength="8.4" lengthAdjust="spacingAndGlyphs">12</text>
<rect x="56.8" y="103" width="1" height="574" fill="#d3d5d8" />
<rect x="57.8" y="102.2" width="980" height="0.9" fill="#d3d5d8" />
<rect x="1027" y="103" width="11" height="574" fill="#fbfbfc" />
<rect x="1027" y="103" width="0.8" height="565" fill="#e9e9eb" />
<rect x="1027.4" y="103" width="9.8" height="50" fill="#bfbfbf" />
<rect x="58" y="668" width="969" height="9" fill="#f5f5f6" />
<rect x="58" y="667.6" width="980" height="0.8" fill="#e6e6e8" />
<rect x="57.2" y="668.4" width="50.3" height="8.6" fill="#c1c1c1" />
<rect x="63" y="645.6" width="62" height="16" rx="8" fill="#f8f8f8"/>
<circle cx="71.6" cy="653.6" r="5.8" fill="none" stroke="#e2e2e2" stroke-width="0.9"/><path d="M69 653.6 h5.2" stroke="#e2e2e2" stroke-width="0.9"/>
<circle cx="115.6" cy="653.6" r="5.8" fill="none" stroke="#e2e2e2" stroke-width="0.9"/><path d="M113 653.6 h5.2 M115.6 651 v5.2" stroke="#e2e2e2" stroke-width="0.9"/>
<text x="93.6" y="656.3" font-size="7" fill="#dadada" font-weight="normal" text-anchor="middle" textLength="17.6" lengthAdjust="spacingAndGlyphs" >100%</text>
<g clip-path="url(#hc)"><rect x="160" y="145" width="362" height="345" fill="#1f3a22"/><g filter="url(#soft)"><path d="M169.5 170.2 Q175.6 165.2 176.5 154.1 Q176.5 143.0 173.9 140.6 L184.8 140.0 Q182.9 144.0 183.3 154.1 Q184.1 165.2 189.9 170.2 Z" fill="#476553"/><path d="M178.7 142.0 Q180.4 154.1 179.4 168.2" stroke="#6a8a74" stroke-width="3.1" fill="none" opacity=".65"/><path d="M175.7 164.2 C167.6 160.3 153.5 160.3 146.8 169.8 C139.8 180.1 138.0 195.1 138.7 204.5 C139.4 218.0 145.0 233.0 153.5 237.5 Q157.2 240.5 161.6 238.1 Q166.8 240.9 171.3 238.5 Q175.7 240.9 180.1 238.5 Q184.6 240.9 189.8 238.1 Q194.2 240.5 197.9 237.5 C206.4 233.0 212.0 218.0 212.7 204.5 C213.4 195.1 211.6 180.1 204.6 169.8 C197.9 160.3 183.8 160.3 175.7 164.2 Z" fill="url(#gG)"/><g clip-path="url(#pk1)"><g filter="url(#soft2)"><path d="M164.4 169.0 Q140.0 201.8 164.4 233.8" stroke="#8fae98" stroke-width="4.2" fill="none" opacity="0.3"/><path d="M169.4 169.0 Q155.7 201.8 169.4 233.8" stroke="#8fae98" stroke-width="5.0" fill="none" opacity="0.32"/><path d="M182.0 169.0 Q195.7 201.8 182.0 233.8" stroke="#8fae98" stroke-width="5.0" fill="none" opacity="0.32"/><path d="M187.0 169.0 Q211.4 201.8 187.0 233.8" stroke="#8fae98" stroke-width="4.2" fill="none" opacity="0.3"/><ellipse cx="175.7" cy="201.8" rx="7.4" ry="31.6" fill="#8fae98" opacity=".45"/><path d="M164.8 163.1 Q132.6 201.8 162.0 239.3" stroke="#3b5846" stroke-width="2.4" fill="none" opacity="0.42"/><path d="M168.4 163.1 Q146.8 201.8 166.5 239.3" stroke="#3b5846" stroke-width="2.4" fill="none" opacity="0.45"/><path d="M172.5 163.1 Q163.1 201.8 171.7 239.3" stroke="#3b5846" stroke-width="2.4" fill="none" opacity="0.45"/><path d="M178.9 163.1 Q188.3 201.8 179.7 239.3" stroke="#3b5846" stroke-width="2.4" fill="none" opacity="0.45"/><path d="M183.0 163.1 Q204.6 201.8 184.9 239.3" stroke="#3b5846" stroke-width="2.4" fill="none" opacity="0.45"/><path d="M186.6 163.1 Q218.8 201.8 189.4 239.3" stroke="#3b5846" stroke-width="2.4" fill="none" opacity="0.42"/><path d="M175.7 164.2 C167.6 160.3 153.5 160.3 146.8 169.8 C139.8 180.1 138.0 195.1 138.7 204.5 C139.4 218.0 145.0 233.0 153.5 237.5 Q157.2 240.5 161.6 238.1 Q166.8 240.9 171.3 238.5 Q175.7 240.9 180.1 238.5 Q184.6 240.9 189.8 238.1 Q194.2 240.5 197.9 237.5 C206.4 233.0 212.0 218.0 212.7 204.5 C213.4 195.1 211.6 180.1 204.6 169.8 C197.9 160.3 183.8 160.3 175.7 164.2 Z" fill="none" stroke="#3b5846" stroke-width="3.6" opacity=".3"/></g><ellipse cx="173.5" cy="180.1" rx="2.2" ry="7.1" fill="#9fd4b3" opacity=".6" filter="url(#soft)"/></g></g><g filter="url(#soft)"><path d="M269.8 168.3 Q275.9 163.3 276.8 152.5 Q276.8 142.0 274.2 139.6 L285.1 139.0 Q283.2 143.0 283.6 152.5 Q284.4 163.3 290.2 168.3 Z" fill="#8a4f1e"/><path d="M279.0 141.0 Q280.7 152.5 279.7 166.3" stroke="#a3682c" stroke-width="3.1" fill="none" opacity=".65"/><path d="M280.0 162.3 C270.6 158.4 254.4 158.4 246.8 167.7 C238.7 177.7 236.5 192.4 237.4 201.6 C238.3 214.8 244.6 229.4 254.4 233.9 Q258.7 236.8 263.8 234.4 Q269.8 237.1 274.9 234.8 Q280.0 237.1 285.1 234.8 Q290.2 237.1 296.2 234.4 Q301.3 236.8 305.6 233.9 C315.4 229.4 321.7 214.8 322.6 201.6 C323.5 192.4 321.3 177.7 313.2 167.7 C305.6 158.4 289.4 158.4 280.0 162.3 Z" fill="url(#gO)"/><g clip-path="url(#pk2)"><g filter="url(#soft2)"><path d="M267.0 166.9 Q238.9 198.9 267.0 230.2" stroke="#a66c33" stroke-width="4.2" fill="none" opacity="0.3"/><path d="M272.7 166.9 Q257.0 198.9 272.7 230.2" stroke="#a66c33" stroke-width="5.0" fill="none" opacity="0.32"/><path d="M287.3 166.9 Q303.0 198.9 287.3 230.2" stroke="#a66c33" stroke-width="5.0" fill="none" opacity="0.32"/><path d="M293.0 166.9 Q321.1 198.9 293.0 230.2" stroke="#a66c33" stroke-width="4.2" fill="none" opacity="0.3"/><ellipse cx="280.0" cy="198.9" rx="8.5" ry="30.9" fill="#a66c33" opacity=".45"/><path d="M267.4 161.1 Q230.4 198.9 264.3 235.6" stroke="#6e3c14" stroke-width="2.4" fill="none" opacity="0.42"/><path d="M271.6 161.1 Q246.7 198.9 269.5 235.6" stroke="#6e3c14" stroke-width="2.4" fill="none" opacity="0.45"/><path d="M276.3 161.1 Q265.5 198.9 275.4 235.6" stroke="#6e3c14" stroke-width="2.4" fill="none" opacity="0.45"/><path d="M283.7 161.1 Q294.5 198.9 284.6 235.6" stroke="#6e3c14" stroke-width="2.4" fill="none" opacity="0.45"/><path d="M288.4 161.1 Q313.3 198.9 290.5 235.6" stroke="#6e3c14" stroke-width="2.4" fill="none" opacity="0.45"/><path d="M292.6 161.1 Q329.6 198.9 295.7 235.6" stroke="#6e3c14" stroke-width="2.4" fill="none" opacity="0.42"/><path d="M280.0 162.3 C270.6 158.4 254.4 158.4 246.8 167.7 C238.7 177.7 236.5 192.4 237.4 201.6 C238.3 214.8 244.6 229.4 254.4 233.9 Q258.7 236.8 263.8 234.4 Q269.8 237.1 274.9 234.8 Q280.0 237.1 285.1 234.8 Q290.2 237.1 296.2 234.4 Q301.3 236.8 305.6 233.9 C315.4 229.4 321.7 214.8 322.6 201.6 C323.5 192.4 321.3 177.7 313.2 167.7 C305.6 158.4 289.4 158.4 280.0 162.3 Z" fill="none" stroke="#6e3c14" stroke-width="3.6" opacity=".3"/></g><ellipse cx="277.4" cy="177.7" rx="2.6" ry="6.9" fill="#a66c33" opacity=".6" filter="url(#soft)"/></g></g><g filter="url(#soft)"><path d="M379.8 161.6 Q385.9 156.6 386.8 146.5 Q386.8 137.0 384.2 134.6 L395.1 134.0 Q393.2 138.0 393.6 146.5 Q394.4 156.6 400.2 161.6 Z" fill="#bccdc3"/><path d="M389.0 136.0 Q390.7 146.5 389.7 159.6" stroke="#d6e2da" stroke-width="3.1" fill="none" opacity=".65"/><path d="M390.0 154.0 C381.8 154.0 377.7 158.8 372.8 162.8 C366.2 163.6 359.7 166.0 355.6 172.4 C350.6 179.6 348.2 190.8 349.0 200.4 C349.8 214.0 356.0 229.2 365.4 233.8 Q369.5 236.8 374.4 234.4 Q380.2 237.2 385.1 234.8 Q390.0 237.2 394.9 234.8 Q399.8 237.2 405.6 234.4 Q410.5 236.8 414.6 233.8 C424.0 229.2 430.2 214.0 431.0 200.4 C431.8 190.8 429.4 179.6 424.4 172.4 C420.3 166.0 413.8 163.6 408.0 162.8 C403.1 158.8 398.2 154.0 390.0 154.0 Z" fill="url(#gW)"/><g clip-path="url(#pk3)"><g filter="url(#soft2)"><path d="M377.5 164.4 Q350.4 197.6 377.5 230.0" stroke="#e3ece6" stroke-width="4.2" fill="none" opacity="0.3"/><path d="M383.0 164.4 Q367.9 197.6 383.0 230.0" stroke="#e3ece6" stroke-width="5.0" fill="none" opacity="0.32"/><path d="M397.0 164.4 Q412.1 197.6 397.0 230.0" stroke="#e3ece6" stroke-width="5.0" fill="none" opacity="0.32"/><path d="M402.5 164.4 Q429.6 197.6 402.5 230.0" stroke="#e3ece6" stroke-width="4.2" fill="none" opacity="0.3"/><ellipse cx="390.0" cy="197.6" rx="8.2" ry="32.0" fill="#e3ece6" opacity=".45"/><path d="M379.9 155.6 Q342.3 197.6 374.9 235.6" stroke="#a2b7ac" stroke-width="2.4" fill="none" opacity="0.42"/><path d="M383.2 155.6 Q358.0 197.6 379.9 235.6" stroke="#a2b7ac" stroke-width="2.4" fill="none" opacity="0.45"/><path d="M387.0 155.6 Q376.0 197.6 385.6 235.6" stroke="#a2b7ac" stroke-width="2.4" fill="none" opacity="0.45"/><path d="M393.0 155.6 Q404.0 197.6 394.4 235.6" stroke="#a2b7ac" stroke-width="2.4" fill="none" opacity="0.45"/><path d="M396.8 155.6 Q422.0 197.6 400.1 235.6" stroke="#a2b7ac" stroke-width="2.4" fill="none" opacity="0.45"/><path d="M400.1 155.6 Q437.7 197.6 405.1 235.6" stroke="#a2b7ac" stroke-width="2.4" fill="none" opacity="0.42"/><path d="M390.0 154.0 C381.8 154.0 377.7 158.8 372.8 162.8 C366.2 163.6 359.7 166.0 355.6 172.4 C350.6 179.6 348.2 190.8 349.0 200.4 C349.8 214.0 356.0 229.2 365.4 233.8 Q369.5 236.8 374.4 234.4 Q380.2 237.2 385.1 234.8 Q390.0 237.2 394.9 234.8 Q399.8 237.2 405.6 234.4 Q410.5 236.8 414.6 233.8 C424.0 229.2 430.2 214.0 431.0 200.4 C431.8 190.8 429.4 179.6 424.4 172.4 C420.3 166.0 413.8 163.6 408.0 162.8 C403.1 158.8 398.2 154.0 390.0 154.0 Z" fill="none" stroke="#a2b7ac" stroke-width="3.6" opacity=".3"/></g><ellipse cx="387.5" cy="175.6" rx="2.5" ry="7.2" fill="#e3ece6" opacity=".6" filter="url(#soft)"/></g></g><g filter="url(#soft)"><path d="M494.4 169.8 Q500.5 164.8 501.4 152.2 Q501.4 139.0 498.8 136.6 L509.7 136.0 Q507.8 140.0 508.2 152.2 Q509.0 164.8 514.8 169.8 Z" fill="#476553"/><path d="M503.6 138.0 Q505.3 152.2 504.3 167.8" stroke="#6a8a74" stroke-width="3.1" fill="none" opacity=".65"/><path d="M500.6 163.8 C492.2 159.9 477.6 159.9 470.6 169.4 C463.4 179.7 461.4 194.7 462.2 204.1 C463.0 217.6 468.7 232.6 477.6 237.1 Q481.4 240.1 486.0 237.7 Q491.4 240.5 496.0 238.1 Q500.6 240.5 505.2 238.1 Q509.8 240.5 515.2 237.7 Q519.8 240.1 523.6 237.1 C532.5 232.6 538.2 217.6 539.0 204.1 C539.8 194.7 537.8 179.7 530.6 169.4 C523.6 159.9 509.0 159.9 500.6 163.8 Z" fill="url(#gG)"/><g clip-path="url(#pk4)"><g filter="url(#soft2)"><path d="M488.8 168.6 Q463.5 201.4 488.8 233.4" stroke="#8fae98" stroke-width="4.2" fill="none" opacity="0.3"/><path d="M494.0 168.6 Q479.9 201.4 494.0 233.4" stroke="#8fae98" stroke-width="5.0" fill="none" opacity="0.32"/><path d="M507.2 168.6 Q521.3 201.4 507.2 233.4" stroke="#8fae98" stroke-width="5.0" fill="none" opacity="0.32"/><path d="M512.4 168.6 Q537.7 201.4 512.4 233.4" stroke="#8fae98" stroke-width="4.2" fill="none" opacity="0.3"/><ellipse cx="500.6" cy="201.4" rx="7.7" ry="31.6" fill="#8fae98" opacity=".45"/><path d="M489.3 162.7 Q455.9 201.4 486.4 238.9" stroke="#3b5846" stroke-width="2.4" fill="none" opacity="0.42"/><path d="M493.0 162.7 Q470.6 201.4 491.1 238.9" stroke="#3b5846" stroke-width="2.4" fill="none" opacity="0.45"/><path d="M497.3 162.7 Q487.5 201.4 496.5 238.9" stroke="#3b5846" stroke-width="2.4" fill="none" opacity="0.45"/><path d="M503.9 162.7 Q513.7 201.4 504.7 238.9" stroke="#3b5846" stroke-width="2.4" fill="none" opacity="0.45"/><path d="M508.2 162.7 Q530.6 201.4 510.1 238.9" stroke="#3b5846" stroke-width="2.4" fill="none" opacity="0.45"/><path d="M511.9 162.7 Q545.3 201.4 514.8 238.9" stroke="#3b5846" stroke-width="2.4" fill="none" opacity="0.42"/><path d="M500.6 163.8 C492.2 159.9 477.6 159.9 470.6 169.4 C463.4 179.7 461.4 194.7 462.2 204.1 C463.0 217.6 468.7 232.6 477.6 237.1 Q481.4 240.1 486.0 237.7 Q491.4 240.5 496.0 238.1 Q500.6 240.5 505.2 238.1 Q509.8 240.5 515.2 237.7 Q519.8 240.1 523.6 237.1 C532.5 232.6 538.2 217.6 539.0 204.1 C539.8 194.7 537.8 179.7 530.6 169.4 C523.6 159.9 509.0 159.9 500.6 163.8 Z" fill="none" stroke="#3b5846" stroke-width="3.6" opacity=".3"/></g><ellipse cx="498.3" cy="179.7" rx="2.3" ry="7.1" fill="#9fd4b3" opacity=".6" filter="url(#soft)"/></g></g><g filter="url(#soft)"><path d="M162.8 277.9 Q168.9 272.9 169.8 262.3 Q169.8 252.0 167.2 249.6 L178.1 249.0 Q176.2 253.0 176.6 262.3 Q177.4 272.9 183.2 277.9 Z" fill="#8a4f1e"/><path d="M172.0 251.0 Q173.7 262.3 172.7 275.9" stroke="#a3682c" stroke-width="3.1" fill="none" opacity=".65"/><path d="M174.0 271.9 C164.9 268.0 149.2 268.0 141.8 277.3 C133.9 287.3 131.9 302.0 132.7 311.2 C133.5 324.4 139.7 339.0 149.2 343.5 Q153.3 346.4 158.3 344.0 Q164.1 346.7 169.0 344.4 Q174.0 346.7 179.0 344.4 Q183.9 346.7 189.7 344.0 Q194.7 346.4 198.8 343.5 C208.3 339.0 214.5 324.4 215.3 311.2 C216.1 302.0 214.1 287.3 206.2 277.3 C198.8 268.0 183.1 268.0 174.0 271.9 Z" fill="url(#gO)"/><g clip-path="url(#pk5)"><g filter="url(#soft2)"><path d="M161.4 276.5 Q134.1 308.5 161.4 339.8" stroke="#a66c33" stroke-width="4.2" fill="none" opacity="0.3"/><path d="M166.9 276.5 Q151.7 308.5 166.9 339.8" stroke="#a66c33" stroke-width="5.0" fill="none" opacity="0.32"/><path d="M181.1 276.5 Q196.3 308.5 181.1 339.8" stroke="#a66c33" stroke-width="5.0" fill="none" opacity="0.32"/><path d="M186.6 276.5 Q213.9 308.5 186.6 339.8" stroke="#a66c33" stroke-width="4.2" fill="none" opacity="0.3"/><ellipse cx="174.0" cy="308.5" rx="8.3" ry="30.9" fill="#a66c33" opacity=".45"/><path d="M161.8 270.7 Q125.9 308.5 158.8 345.2" stroke="#6e3c14" stroke-width="2.4" fill="none" opacity="0.42"/><path d="M165.8 270.7 Q141.7 308.5 163.8 345.2" stroke="#6e3c14" stroke-width="2.4" fill="none" opacity="0.45"/><path d="M170.4 270.7 Q159.9 308.5 169.5 345.2" stroke="#6e3c14" stroke-width="2.4" fill="none" opacity="0.45"/><path d="M177.6 270.7 Q188.1 308.5 178.5 345.2" stroke="#6e3c14" stroke-width="2.4" fill="none" opacity="0.45"/><path d="M182.2 270.7 Q206.3 308.5 184.2 345.2" stroke="#6e3c14" stroke-width="2.4" fill="none" opacity="0.45"/><path d="M186.2 270.7 Q222.1 308.5 189.2 345.2" stroke="#6e3c14" stroke-width="2.4" fill="none" opacity="0.42"/><path d="M174.0 271.9 C164.9 268.0 149.2 268.0 141.8 277.3 C133.9 287.3 131.9 302.0 132.7 311.2 C133.5 324.4 139.7 339.0 149.2 343.5 Q153.3 346.4 158.3 344.0 Q164.1 346.7 169.0 344.4 Q174.0 346.7 179.0 344.4 Q183.9 346.7 189.7 344.0 Q194.7 346.4 198.8 343.5 C208.3 339.0 214.5 324.4 215.3 311.2 C216.1 302.0 214.1 287.3 206.2 277.3 C198.8 268.0 183.1 268.0 174.0 271.9 Z" fill="none" stroke="#6e3c14" stroke-width="3.6" opacity=".3"/></g><ellipse cx="171.5" cy="287.3" rx="2.5" ry="6.9" fill="#a66c33" opacity=".6" filter="url(#soft)"/></g></g><g filter="url(#soft)"><path d="M272.2 271.6 Q278.7 266.6 279.6 256.9 Q279.6 248.0 276.9 245.6 L288.4 245.0 Q286.4 249.0 286.8 256.9 Q287.7 266.6 293.8 271.6 Z" fill="#bccdc3"/><path d="M281.9 247.0 Q283.7 256.9 282.6 269.6" stroke="#d6e2da" stroke-width="3.2" fill="none" opacity=".65"/><path d="M279.6 264.0 C271.3 264.0 267.2 268.8 262.2 272.9 C255.5 273.7 248.9 276.2 244.7 282.7 C239.8 290.0 237.3 301.3 238.1 311.1 C238.9 324.9 245.2 340.3 254.7 345.0 Q258.9 348.0 263.8 345.6 Q269.6 348.4 274.6 346.0 Q279.6 348.4 284.6 346.0 Q289.6 348.4 295.4 345.6 Q300.4 348.0 304.5 345.0 C314.0 340.3 320.3 324.9 321.1 311.1 C321.9 301.3 319.4 290.0 314.5 282.7 C310.3 276.2 303.7 273.7 297.9 272.9 C292.9 268.8 287.9 264.0 279.6 264.0 Z" fill="url(#gW)"/><g clip-path="url(#pk6)"><g filter="url(#soft2)"><path d="M266.9 274.5 Q239.5 308.2 266.9 341.1" stroke="#e3ece6" stroke-width="4.2" fill="none" opacity="0.3"/><path d="M272.5 274.5 Q257.2 308.2 272.5 341.1" stroke="#e3ece6" stroke-width="5.0" fill="none" opacity="0.32"/><path d="M286.7 274.5 Q302.0 308.2 286.7 341.1" stroke="#e3ece6" stroke-width="5.0" fill="none" opacity="0.32"/><path d="M292.3 274.5 Q319.7 308.2 292.3 341.1" stroke="#e3ece6" stroke-width="4.2" fill="none" opacity="0.3"/><ellipse cx="279.6" cy="308.2" rx="8.3" ry="32.5" fill="#e3ece6" opacity=".45"/><path d="M269.4 265.6 Q231.3 308.2 264.3 346.8" stroke="#a2b7ac" stroke-width="2.4" fill="none" opacity="0.42"/><path d="M272.8 265.6 Q247.2 308.2 269.3 346.8" stroke="#a2b7ac" stroke-width="2.4" fill="none" opacity="0.45"/><path d="M276.6 265.6 Q265.5 308.2 275.1 346.8" stroke="#a2b7ac" stroke-width="2.4" fill="none" opacity="0.45"/><path d="M282.6 265.6 Q293.7 308.2 284.1 346.8" stroke="#a2b7ac" stroke-width="2.4" fill="none" opacity="0.45"/><path d="M286.4 265.6 Q312.0 308.2 289.9 346.8" stroke="#a2b7ac" stroke-width="2.4" fill="none" opacity="0.45"/><path d="M289.8 265.6 Q327.9 308.2 294.9 346.8" stroke="#a2b7ac" stroke-width="2.4" fill="none" opacity="0.42"/><path d="M279.6 264.0 C271.3 264.0 267.2 268.8 262.2 272.9 C255.5 273.7 248.9 276.2 244.7 282.7 C239.8 290.0 237.3 301.3 238.1 311.1 C238.9 324.9 245.2 340.3 254.7 345.0 Q258.9 348.0 263.8 345.6 Q269.6 348.4 274.6 346.0 Q279.6 348.4 284.6 346.0 Q289.6 348.4 295.4 345.6 Q300.4 348.0 304.5 345.0 C314.0 340.3 320.3 324.9 321.1 311.1 C321.9 301.3 319.4 290.0 314.5 282.7 C310.3 276.2 303.7 273.7 297.9 272.9 C292.9 268.8 287.9 264.0 279.6 264.0 Z" fill="none" stroke="#a2b7ac" stroke-width="3.6" opacity=".3"/></g><ellipse cx="277.1" cy="285.9" rx="2.5" ry="7.3" fill="#e3ece6" opacity=".6" filter="url(#soft)"/></g></g><g filter="url(#soft)"><path d="M381.2 274.9 Q388.0 269.9 389.0 257.9 Q389.0 245.6 386.1 243.2 L398.3 242.6 Q396.2 246.6 396.6 257.9 Q397.5 269.9 404.0 274.9 Z" fill="#476553"/><path d="M391.5 244.6 Q393.4 257.9 392.2 272.9" stroke="#6a8a74" stroke-width="3.4" fill="none" opacity=".65"/><path d="M387.0 268.9 C378.6 264.8 364.0 264.8 357.0 274.6 C349.8 285.3 347.8 300.9 348.6 310.7 C349.4 324.7 355.1 340.2 364.0 345.0 Q367.8 348.0 372.4 345.6 Q377.8 348.4 382.4 346.0 Q387.0 348.4 391.6 346.0 Q396.2 348.4 401.6 345.6 Q406.2 348.0 410.0 345.0 C418.9 340.2 424.6 324.7 425.4 310.7 C426.2 300.9 424.2 285.3 417.0 274.6 C410.0 264.8 395.4 264.8 387.0 268.9 Z" fill="url(#gG)"/><g clip-path="url(#pk7)"><g filter="url(#soft2)"><path d="M375.2 273.8 Q349.9 307.9 375.2 341.1" stroke="#8fae98" stroke-width="4.2" fill="none" opacity="0.3"/><path d="M380.4 273.8 Q366.3 307.9 380.4 341.1" stroke="#8fae98" stroke-width="5.0" fill="none" opacity="0.32"/><path d="M393.6 273.8 Q407.7 307.9 393.6 341.1" stroke="#8fae98" stroke-width="5.0" fill="none" opacity="0.32"/><path d="M398.8 273.8 Q424.1 307.9 398.8 341.1" stroke="#8fae98" stroke-width="4.2" fill="none" opacity="0.3"/><ellipse cx="387.0" cy="307.9" rx="7.7" ry="32.8" fill="#8fae98" opacity=".45"/><path d="M375.7 267.7 Q342.3 307.9 372.8 346.8" stroke="#3b5846" stroke-width="2.4" fill="none" opacity="0.42"/><path d="M379.4 267.7 Q357.0 307.9 377.5 346.8" stroke="#3b5846" stroke-width="2.4" fill="none" opacity="0.45"/><path d="M383.7 267.7 Q373.9 307.9 382.9 346.8" stroke="#3b5846" stroke-width="2.4" fill="none" opacity="0.45"/><path d="M390.3 267.7 Q400.1 307.9 391.1 346.8" stroke="#3b5846" stroke-width="2.4" fill="none" opacity="0.45"/><path d="M394.6 267.7 Q417.0 307.9 396.5 346.8" stroke="#3b5846" stroke-width="2.4" fill="none" opacity="0.45"/><path d="M398.3 267.7 Q431.7 307.9 401.2 346.8" stroke="#3b5846" stroke-width="2.4" fill="none" opacity="0.42"/><path d="M387.0 268.9 C378.6 264.8 364.0 264.8 357.0 274.6 C349.8 285.3 347.8 300.9 348.6 310.7 C349.4 324.7 355.1 340.2 364.0 345.0 Q367.8 348.0 372.4 345.6 Q377.8 348.4 382.4 346.0 Q387.0 348.4 391.6 346.0 Q396.2 348.4 401.6 345.6 Q406.2 348.0 410.0 345.0 C418.9 340.2 424.6 324.7 425.4 310.7 C426.2 300.9 424.2 285.3 417.0 274.6 C410.0 264.8 395.4 264.8 387.0 268.9 Z" fill="none" stroke="#3b5846" stroke-width="3.6" opacity=".3"/></g><ellipse cx="384.7" cy="285.3" rx="2.3" ry="7.4" fill="#9fd4b3" opacity=".6" filter="url(#soft)"/></g></g><g filter="url(#soft)"><path d="M487.4 279.3 Q493.5 274.3 494.4 263.1 Q494.4 252.0 491.8 249.6 L502.7 249.0 Q500.8 253.0 501.2 263.1 Q502.0 274.3 507.8 279.3 Z" fill="#8a4f1e"/><path d="M496.6 251.0 Q498.3 263.1 497.3 277.3" stroke="#a3682c" stroke-width="3.1" fill="none" opacity=".65"/><path d="M500.0 273.3 C490.9 269.4 475.2 269.4 467.8 278.7 C459.9 288.7 457.9 303.4 458.7 312.6 C459.5 325.8 465.7 340.4 475.2 344.9 Q479.4 347.8 484.3 345.4 Q490.1 348.1 495.0 345.8 Q500.0 348.1 505.0 345.8 Q509.9 348.1 515.7 345.4 Q520.6 347.8 524.8 344.9 C534.3 340.4 540.5 325.8 541.3 312.6 C542.1 303.4 540.1 288.7 532.2 278.7 C524.8 269.4 509.1 269.4 500.0 273.3 Z" fill="url(#gO)"/><g clip-path="url(#pk8)"><g filter="url(#soft2)"><path d="M487.4 277.9 Q460.1 309.9 487.4 341.2" stroke="#a66c33" stroke-width="4.2" fill="none" opacity="0.3"/><path d="M492.9 277.9 Q477.7 309.9 492.9 341.2" stroke="#a66c33" stroke-width="5.0" fill="none" opacity="0.32"/><path d="M507.1 277.9 Q522.3 309.9 507.1 341.2" stroke="#a66c33" stroke-width="5.0" fill="none" opacity="0.32"/><path d="M512.6 277.9 Q539.9 309.9 512.6 341.2" stroke="#a66c33" stroke-width="4.2" fill="none" opacity="0.3"/><ellipse cx="500.0" cy="309.9" rx="8.3" ry="30.9" fill="#a66c33" opacity=".45"/><path d="M487.8 272.1 Q451.9 309.9 484.8 346.6" stroke="#6e3c14" stroke-width="2.4" fill="none" opacity="0.42"/><path d="M491.8 272.1 Q467.7 309.9 489.8 346.6" stroke="#6e3c14" stroke-width="2.4" fill="none" opacity="0.45"/><path d="M496.4 272.1 Q485.9 309.9 495.5 346.6" stroke="#6e3c14" stroke-width="2.4" fill="none" opacity="0.45"/><path d="M503.6 272.1 Q514.1 309.9 504.5 346.6" stroke="#6e3c14" stroke-width="2.4" fill="none" opacity="0.45"/><path d="M508.2 272.1 Q532.3 309.9 510.2 346.6" stroke="#6e3c14" stroke-width="2.4" fill="none" opacity="0.45"/><path d="M512.2 272.1 Q548.1 309.9 515.2 346.6" stroke="#6e3c14" stroke-width="2.4" fill="none" opacity="0.42"/><path d="M500.0 273.3 C490.9 269.4 475.2 269.4 467.8 278.7 C459.9 288.7 457.9 303.4 458.7 312.6 C459.5 325.8 465.7 340.4 475.2 344.9 Q479.4 347.8 484.3 345.4 Q490.1 348.1 495.0 345.8 Q500.0 348.1 505.0 345.8 Q509.9 348.1 515.7 345.4 Q520.6 347.8 524.8 344.9 C534.3 340.4 540.5 325.8 541.3 312.6 C542.1 303.4 540.1 288.7 532.2 278.7 C524.8 269.4 509.1 269.4 500.0 273.3 Z" fill="none" stroke="#6e3c14" stroke-width="3.6" opacity=".3"/></g><ellipse cx="497.5" cy="288.7" rx="2.5" ry="6.9" fill="#a66c33" opacity=".6" filter="url(#soft)"/></g></g><g filter="url(#soft)"><path d="M270.4 384.1 Q277.2 379.1 278.2 366.6 Q278.2 353.8 275.3 351.4 L287.5 350.8 Q285.4 354.8 285.8 366.6 Q286.7 379.1 293.2 384.1 Z" fill="#476553"/><path d="M280.7 352.8 Q282.6 366.6 281.4 382.1" stroke="#6a8a74" stroke-width="3.4" fill="none" opacity=".65"/><path d="M278.6 378.1 C270.5 374.0 256.6 374.0 250.1 383.9 C243.1 394.6 241.3 410.3 242.0 420.1 C242.7 434.2 248.2 449.8 256.6 454.5 Q260.3 457.6 264.7 455.2 Q269.8 458.0 274.2 455.6 Q278.6 458.0 283.0 455.6 Q287.4 458.0 292.5 455.2 Q296.9 457.6 300.6 454.5 C309.0 449.8 314.5 434.2 315.2 420.1 C315.9 410.3 314.1 394.6 307.1 383.9 C300.6 374.0 286.7 374.0 278.6 378.1 Z" fill="url(#gG)"/><g clip-path="url(#pk9)"><g filter="url(#soft2)"><path d="M267.4 383.1 Q243.3 417.3 267.4 450.6" stroke="#8fae98" stroke-width="4.2" fill="none" opacity="0.3"/><path d="M272.3 383.1 Q258.9 417.3 272.3 450.6" stroke="#8fae98" stroke-width="5.0" fill="none" opacity="0.32"/><path d="M284.9 383.1 Q298.3 417.3 284.9 450.6" stroke="#8fae98" stroke-width="5.0" fill="none" opacity="0.32"/><path d="M289.8 383.1 Q313.9 417.3 289.8 450.6" stroke="#8fae98" stroke-width="4.2" fill="none" opacity="0.3"/><ellipse cx="278.6" cy="417.3" rx="7.3" ry="33.0" fill="#8fae98" opacity=".45"/><path d="M267.8 376.9 Q236.0 417.3 265.1 456.4" stroke="#3b5846" stroke-width="2.4" fill="none" opacity="0.42"/><path d="M271.4 376.9 Q250.0 417.3 269.5 456.4" stroke="#3b5846" stroke-width="2.4" fill="none" opacity="0.45"/><path d="M275.4 376.9 Q266.1 417.3 274.6 456.4" stroke="#3b5846" stroke-width="2.4" fill="none" opacity="0.45"/><path d="M281.8 376.9 Q291.1 417.3 282.6 456.4" stroke="#3b5846" stroke-width="2.4" fill="none" opacity="0.45"/><path d="M285.8 376.9 Q307.2 417.3 287.7 456.4" stroke="#3b5846" stroke-width="2.4" fill="none" opacity="0.45"/><path d="M289.4 376.9 Q321.2 417.3 292.1 456.4" stroke="#3b5846" stroke-width="2.4" fill="none" opacity="0.42"/><path d="M278.6 378.1 C270.5 374.0 256.6 374.0 250.1 383.9 C243.1 394.6 241.3 410.3 242.0 420.1 C242.7 434.2 248.2 449.8 256.6 454.5 Q260.3 457.6 264.7 455.2 Q269.8 458.0 274.2 455.6 Q278.6 458.0 283.0 455.6 Q287.4 458.0 292.5 455.2 Q296.9 457.6 300.6 454.5 C309.0 449.8 314.5 434.2 315.2 420.1 C315.9 410.3 314.1 394.6 307.1 383.9 C300.6 374.0 286.7 374.0 278.6 378.1 Z" fill="none" stroke="#3b5846" stroke-width="3.6" opacity=".3"/></g><ellipse cx="276.4" cy="394.6" rx="2.2" ry="7.4" fill="#9fd4b3" opacity=".6" filter="url(#soft)"/></g></g><g filter="url(#soft)"><path d="M374.0 389.5 Q379.4 384.5 380.1 373.4 Q380.1 362.4 377.9 360.0 L387.5 359.4 Q385.9 363.4 386.1 373.4 Q386.9 384.5 392.0 389.5 Z" fill="#8a4f1e"/><path d="M382.1 361.4 Q383.6 373.4 382.7 387.5" stroke="#a3682c" stroke-width="2.7" fill="none" opacity=".65"/><path d="M383.0 383.5 C373.9 379.6 358.2 379.6 350.8 388.9 C342.9 398.9 340.9 413.6 341.7 422.8 C342.5 436.0 348.7 450.6 358.2 455.1 Q362.4 458.0 367.3 455.6 Q373.1 458.3 378.0 456.0 Q383.0 458.3 388.0 456.0 Q392.9 458.3 398.7 455.6 Q403.6 458.0 407.8 455.1 C417.3 450.6 423.5 436.0 424.3 422.8 C425.1 413.6 423.1 398.9 415.2 388.9 C407.8 379.6 392.1 379.6 383.0 383.5 Z" fill="url(#gO)"/><g clip-path="url(#pk10)"><g filter="url(#soft2)"><path d="M370.4 388.1 Q343.1 420.1 370.4 451.4" stroke="#a66c33" stroke-width="4.2" fill="none" opacity="0.3"/><path d="M375.9 388.1 Q360.7 420.1 375.9 451.4" stroke="#a66c33" stroke-width="5.0" fill="none" opacity="0.32"/><path d="M390.1 388.1 Q405.3 420.1 390.1 451.4" stroke="#a66c33" stroke-width="5.0" fill="none" opacity="0.32"/><path d="M395.6 388.1 Q422.9 420.1 395.6 451.4" stroke="#a66c33" stroke-width="4.2" fill="none" opacity="0.3"/><ellipse cx="383.0" cy="420.1" rx="8.3" ry="30.9" fill="#a66c33" opacity=".45"/><path d="M370.8 382.3 Q334.9 420.1 367.8 456.8" stroke="#6e3c14" stroke-width="2.4" fill="none" opacity="0.42"/><path d="M374.8 382.3 Q350.7 420.1 372.8 456.8" stroke="#6e3c14" stroke-width="2.4" fill="none" opacity="0.45"/><path d="M379.4 382.3 Q368.9 420.1 378.5 456.8" stroke="#6e3c14" stroke-width="2.4" fill="none" opacity="0.45"/><path d="M386.6 382.3 Q397.1 420.1 387.5 456.8" stroke="#6e3c14" stroke-width="2.4" fill="none" opacity="0.45"/><path d="M391.2 382.3 Q415.3 420.1 393.2 456.8" stroke="#6e3c14" stroke-width="2.4" fill="none" opacity="0.45"/><path d="M395.2 382.3 Q431.1 420.1 398.2 456.8" stroke="#6e3c14" stroke-width="2.4" fill="none" opacity="0.42"/><path d="M383.0 383.5 C373.9 379.6 358.2 379.6 350.8 388.9 C342.9 398.9 340.9 413.6 341.7 422.8 C342.5 436.0 348.7 450.6 358.2 455.1 Q362.4 458.0 367.3 455.6 Q373.1 458.3 378.0 456.0 Q383.0 458.3 388.0 456.0 Q392.9 458.3 398.7 455.6 Q403.6 458.0 407.8 455.1 C417.3 450.6 423.5 436.0 424.3 422.8 C425.1 413.6 423.1 398.9 415.2 388.9 C407.8 379.6 392.1 379.6 383.0 383.5 Z" fill="none" stroke="#6e3c14" stroke-width="3.6" opacity=".3"/></g><ellipse cx="380.5" cy="398.9" rx="2.5" ry="6.9" fill="#a66c33" opacity=".6" filter="url(#soft)"/></g></g><g clip-path="url(#dc11)" filter="url(#soft)"><circle cx="226.2" cy="152.8" r="10.2" fill="url(#gold)"/><circle cx="222.6" cy="148.2" r="3.3" fill="#f3e07a" opacity="0.65"/><circle cx="229.3" cy="147.2" r="2.7" fill="#eed566" opacity="0.55"/><circle cx="220.6" cy="155.4" r="3.1" fill="#a97e14" opacity="0.5"/><circle cx="230.8" cy="156.4" r="3.1" fill="#e8cd58" opacity="0.5"/><circle cx="226.2" cy="158.9" r="2.9" fill="#b58a1a" opacity="0.5"/><circle cx="225.2" cy="152.3" r="2.2" fill="#f6e68a" opacity="0.55"/><circle cx="232.3" cy="151.8" r="2.0" fill="#a57a12" opacity="0.45"/><path d="M224.7 145.7 L229.8 157.9" stroke="#9c740f" stroke-width="1.2" opacity=".45"/></g><g clip-path="url(#dc12)" filter="url(#soft)"><circle cx="444.6" cy="152.2" r="10" fill="url(#gold)"/><circle cx="441.1" cy="147.7" r="3.2" fill="#f3e07a" opacity="0.65"/><circle cx="447.6" cy="146.7" r="2.6" fill="#eed566" opacity="0.55"/><circle cx="439.1" cy="154.7" r="3.0" fill="#a97e14" opacity="0.5"/><circle cx="449.1" cy="155.7" r="3.0" fill="#e8cd58" opacity="0.5"/><circle cx="444.6" cy="158.2" r="2.8" fill="#b58a1a" opacity="0.5"/><circle cx="443.6" cy="151.7" r="2.2" fill="#f6e68a" opacity="0.55"/><circle cx="450.6" cy="151.2" r="2.0" fill="#a57a12" opacity="0.45"/><path d="M443.1 145.2 L448.1 157.2" stroke="#9c740f" stroke-width="1.2" opacity=".45"/></g><g clip-path="url(#dc13)" filter="url(#soft)"><circle cx="226" cy="252.8" r="9.9" fill="url(#gold)"/><circle cx="222.5" cy="248.3" r="3.2" fill="#f3e07a" opacity="0.65"/><circle cx="229.0" cy="247.4" r="2.6" fill="#eed566" opacity="0.55"/><circle cx="220.6" cy="255.3" r="3.0" fill="#a97e14" opacity="0.5"/><circle cx="230.5" cy="256.3" r="3.0" fill="#e8cd58" opacity="0.5"/><circle cx="226.0" cy="258.7" r="2.8" fill="#b58a1a" opacity="0.5"/><circle cx="225.0" cy="252.3" r="2.2" fill="#f6e68a" opacity="0.55"/><circle cx="231.9" cy="251.8" r="2.0" fill="#a57a12" opacity="0.45"/><path d="M224.5 245.9 L229.5 257.8" stroke="#9c740f" stroke-width="1.2" opacity=".45"/></g><g clip-path="url(#dc14)" filter="url(#soft)"><circle cx="331.5" cy="252.8" r="9.9" fill="url(#gold)"/><circle cx="328.0" cy="248.3" r="3.2" fill="#f3e07a" opacity="0.65"/><circle cx="334.5" cy="247.4" r="2.6" fill="#eed566" opacity="0.55"/><circle cx="326.1" cy="255.3" r="3.0" fill="#a97e14" opacity="0.5"/><circle cx="336.0" cy="256.3" r="3.0" fill="#e8cd58" opacity="0.5"/><circle cx="331.5" cy="258.7" r="2.8" fill="#b58a1a" opacity="0.5"/><circle cx="330.5" cy="252.3" r="2.2" fill="#f6e68a" opacity="0.55"/><circle cx="337.4" cy="251.8" r="2.0" fill="#a57a12" opacity="0.45"/><path d="M330.0 245.9 L335.0 257.8" stroke="#9c740f" stroke-width="1.2" opacity=".45"/></g><g clip-path="url(#dc15)" filter="url(#soft)"><circle cx="444.6" cy="252.8" r="9.9" fill="url(#gold)"/><circle cx="441.1" cy="248.3" r="3.2" fill="#f3e07a" opacity="0.65"/><circle cx="447.6" cy="247.4" r="2.6" fill="#eed566" opacity="0.55"/><circle cx="439.2" cy="255.3" r="3.0" fill="#a97e14" opacity="0.5"/><circle cx="449.1" cy="256.3" r="3.0" fill="#e8cd58" opacity="0.5"/><circle cx="444.6" cy="258.7" r="2.8" fill="#b58a1a" opacity="0.5"/><circle cx="443.6" cy="252.3" r="2.2" fill="#f6e68a" opacity="0.55"/><circle cx="450.5" cy="251.8" r="2.0" fill="#a57a12" opacity="0.45"/><path d="M443.1 245.9 L448.1 257.8" stroke="#9c740f" stroke-width="1.2" opacity=".45"/></g><g clip-path="url(#dc16)" filter="url(#soft)"><circle cx="225.8" cy="359.4" r="9.9" fill="url(#gold)"/><circle cx="222.3" cy="354.9" r="3.2" fill="#f3e07a" opacity="0.65"/><circle cx="228.8" cy="354.0" r="2.6" fill="#eed566" opacity="0.55"/><circle cx="220.4" cy="361.9" r="3.0" fill="#a97e14" opacity="0.5"/><circle cx="230.3" cy="362.9" r="3.0" fill="#e8cd58" opacity="0.5"/><circle cx="225.8" cy="365.3" r="2.8" fill="#b58a1a" opacity="0.5"/><circle cx="224.8" cy="358.9" r="2.2" fill="#f6e68a" opacity="0.55"/><circle cx="231.7" cy="358.4" r="2.0" fill="#a57a12" opacity="0.45"/><path d="M224.3 352.5 L229.3 364.3" stroke="#9c740f" stroke-width="1.2" opacity=".45"/></g><g clip-path="url(#dc17)" filter="url(#soft)"><circle cx="331.5" cy="359.4" r="9.9" fill="url(#gold)"/><circle cx="328.0" cy="354.9" r="3.2" fill="#f3e07a" opacity="0.65"/><circle cx="334.5" cy="354.0" r="2.6" fill="#eed566" opacity="0.55"/><circle cx="326.1" cy="361.9" r="3.0" fill="#a97e14" opacity="0.5"/><circle cx="336.0" cy="362.9" r="3.0" fill="#e8cd58" opacity="0.5"/><circle cx="331.5" cy="365.3" r="2.8" fill="#b58a1a" opacity="0.5"/><circle cx="330.5" cy="358.9" r="2.2" fill="#f6e68a" opacity="0.55"/><circle cx="337.4" cy="358.4" r="2.0" fill="#a57a12" opacity="0.45"/><path d="M330.0 352.5 L335.0 364.3" stroke="#9c740f" stroke-width="1.2" opacity=".45"/></g><g clip-path="url(#dc18)" filter="url(#soft)"><circle cx="444.6" cy="359" r="9.9" fill="url(#gold)"/><circle cx="441.1" cy="354.5" r="3.2" fill="#f3e07a" opacity="0.65"/><circle cx="447.6" cy="353.6" r="2.6" fill="#eed566" opacity="0.55"/><circle cx="439.2" cy="361.5" r="3.0" fill="#a97e14" opacity="0.5"/><circle cx="449.1" cy="362.5" r="3.0" fill="#e8cd58" opacity="0.5"/><circle cx="444.6" cy="364.9" r="2.8" fill="#b58a1a" opacity="0.5"/><circle cx="443.6" cy="358.5" r="2.2" fill="#f6e68a" opacity="0.55"/><circle cx="450.5" cy="358.0" r="2.0" fill="#a57a12" opacity="0.45"/><path d="M443.1 352.1 L448.1 363.9" stroke="#9c740f" stroke-width="1.2" opacity=".45"/></g><g clip-path="url(#dc19)" filter="url(#soft)"><circle cx="333.4" cy="482.6" r="10" fill="url(#gold)"/><circle cx="329.9" cy="478.1" r="3.2" fill="#f3e07a" opacity="0.65"/><circle cx="336.4" cy="477.1" r="2.6" fill="#eed566" opacity="0.55"/><circle cx="327.9" cy="485.1" r="3.0" fill="#a97e14" opacity="0.5"/><circle cx="337.9" cy="486.1" r="3.0" fill="#e8cd58" opacity="0.5"/><circle cx="333.4" cy="488.6" r="2.8" fill="#b58a1a" opacity="0.5"/><circle cx="332.4" cy="482.1" r="2.2" fill="#f6e68a" opacity="0.55"/><circle cx="339.4" cy="481.6" r="2.0" fill="#a57a12" opacity="0.45"/><path d="M331.9 475.6 L336.9 487.6" stroke="#9c740f" stroke-width="1.2" opacity=".45"/></g></g>
<path d="M341.2 235.2 C343.0 232.2 348.4 222.7 352.2 217.2 C356.0 211.7 359.9 207.4 364.2 202.4 C368.5 197.4 373.4 191.8 378.2 187.0 C383.0 182.2 387.3 178.2 393.2 173.6 C399.1 169.0 408.0 162.8 413.5 159.6 C419.0 156.4 422.2 155.7 426.2 154.6 C430.1 153.5 433.5 153.2 437.2 152.9 C440.9 152.6 444.4 152.3 448.2 152.6 C452.0 152.8 456.3 153.4 460.0 154.4 C463.7 155.4 466.7 156.7 470.2 158.6 C473.7 160.5 476.5 162.2 480.8 165.8 C485.1 169.4 492.0 175.5 496.0 180.4 C500.0 185.3 502.6 190.4 505.0 195.4 C507.4 200.4 509.3 206.1 510.6 210.5 C511.9 214.9 512.3 218.4 512.8 222.0 C513.3 225.6 513.5 228.0 513.6 232.0 C513.7 236.0 513.9 240.9 513.6 246.0 C513.3 251.1 512.8 257.0 512.0 262.5 C511.2 268.0 510.1 273.4 508.9 278.8 C507.7 284.2 506.3 289.6 504.6 295.0 C502.9 300.4 500.9 305.8 498.5 311.3 C496.1 316.8 492.8 323.2 490.2 328.0 C487.6 332.8 485.8 336.2 483.2 340.0 C480.6 343.8 478.5 345.5 474.6 350.7 C470.7 355.9 465.1 364.5 459.6 371.4 C454.1 378.3 447.8 385.1 441.5 392.0 C435.2 398.9 428.8 405.8 421.9 412.7 C415.0 419.6 407.6 426.5 400.2 433.4 C392.8 440.3 387.0 446.1 377.2 454.1 C367.4 462.1 347.2 477.0 341.2 481.6 L341.2 481.6 C335.2 477.0 315.0 462.1 305.2 454.1 C295.4 446.1 289.6 440.3 282.2 433.4 C274.8 426.5 267.4 419.6 260.5 412.7 C253.6 405.8 247.2 398.9 240.9 392.0 C234.6 385.1 228.3 378.3 222.8 371.4 C217.3 364.5 211.7 355.9 207.8 350.7 C203.9 345.5 201.8 343.8 199.2 340.0 C196.6 336.2 194.8 332.8 192.2 328.0 C189.6 323.2 186.3 316.8 183.9 311.3 C181.5 305.8 179.5 300.4 177.8 295.0 C176.1 289.6 174.7 284.2 173.5 278.8 C172.3 273.4 171.2 268.0 170.4 262.5 C169.6 257.0 169.1 251.1 168.8 246.0 C168.5 240.9 168.5 236.5 168.8 232.0 C169.1 227.5 169.1 224.8 170.4 218.9 C171.7 213.0 174.1 202.9 176.6 196.7 C179.1 190.5 181.3 186.8 185.6 181.9 C189.9 177.0 197.8 170.9 202.6 167.2 C207.4 163.5 210.1 161.8 214.2 159.8 C218.3 157.8 222.9 156.1 227.2 155.2 C231.5 154.3 235.9 154.3 240.2 154.4 C244.5 154.5 248.4 154.6 253.2 155.8 C258.0 157.0 263.2 158.4 269.2 161.4 C275.2 164.4 283.4 169.7 289.2 174.0 C295.0 178.3 299.4 182.3 304.2 187.0 C309.0 191.7 313.9 197.4 318.2 202.4 C322.5 207.4 326.4 211.7 330.2 217.2 C334.0 222.7 339.4 232.2 341.2 235.2 Z" fill="none" stroke="#1f3a22" stroke-opacity=".25" stroke-width="0.8"/>
<rect x="168" y="152.5" width="346" height="330.1" fill="none" stroke="#a9a9a9" stroke-width="2"/>
<circle cx="158.1" cy="142.7" r="8.3" fill="#596267"/><path d="M154.4 139 l7.4 7.4 M161.8 139 l-7.4 7.4" stroke="#f1f3f4" stroke-width="1.3"/>
<circle cx="523.4" cy="142.7" r="8.3" fill="#596267"/>
<path d="M527 141.4 a4 4 0 1 0 0.4 3" fill="none" stroke="#fff" stroke-width="1.2"/><path d="M528.6 138.6 v3.6 h-3.6 z" fill="#fff"/>
<circle cx="158.3" cy="492.1" r="8.3" fill="#596267"/>
<rect x="154.1" y="490.5" width="8.3" height="6.5" rx="1.3" fill="none" stroke="#e3e7e9" stroke-width="1.3"/><path d="M156 490.4 v-0.9 a2.2 2.2 0 0 1 4.4 0 v0.9" fill="none" stroke="#e3e7e9" stroke-width="1.3"/><rect x="157.5" y="492.6" width="1.5" height="2.4" fill="#e3e7e9"/>
<circle cx="523.5" cy="492.1" r="8.3" fill="#596267"/>
<path d="M520.4 489 l6.2 6.2" stroke="#fff" stroke-width="1.2"/><path d="M519.2 487.8 h4 l-4 4 z M527.8 496.4 h-4 l4 -4 z" fill="#fff"/>
<text x="340.9" y="142.7" font-size="8" fill="#8a8e93" font-weight="normal" text-anchor="middle" textLength="21.6" lengthAdjust="spacingAndGlyphs" >7.686"</text>
<text x="533.1" y="317.6" font-size="8" fill="#84888d" font-weight="normal" text-anchor="start" textLength="21.0" lengthAdjust="spacingAndGlyphs" >7.273"</text>
<path d="M325 317.6 h31.6 M340.6 301.2 v32.4" stroke="#b8cbbd" stroke-opacity=".55" stroke-width="1"/>
<rect x="1038" y="56" width="162" height="621" fill="#f4f5f7" />
<rect x="1038" y="56" width="162" height="14" fill="#e4e5e7" />
<text x="1078.4" y="66.2" font-size="7.8" fill="#54585d" font-weight="normal" text-anchor="middle" textLength="21.6" lengthAdjust="spacingAndGlyphs" >Layers</text>
<text x="1160.0" y="66.2" font-size="7.8" fill="#54585d" font-weight="normal" text-anchor="middle" textLength="36.0" lengthAdjust="spacingAndGlyphs" >Color Sync</text>
<rect x="1038" y="69.2" width="162" height="1.6" fill="#d2d3d6" />
<rect x="1038" y="69.2" width="81.5" height="1.8" fill="#9b9da0" />
<rect x="1038" y="71" width="162" height="31" fill="#e1e2e4" />
<rect x="1038" y="102" width="162" height="1" fill="#d4d5d8" />
<g stroke="#c4c6c9" stroke-width="0.8" fill="none"><rect x="1051" y="75" width="10" height="9.6" stroke-dasharray="1.4 1"/><rect x="1053.4" y="77.2" width="3.6" height="3.6"/><rect x="1055.6" y="79.4" width="3.6" height="3.6"/></g>
<rect x="1050.1" y="74.1" width="1.8" height="1.8" fill="#c4c6c9"/>
<rect x="1060.1" y="74.1" width="1.8" height="1.8" fill="#c4c6c9"/>
<rect x="1050.1" y="83.69999999999999" width="1.8" height="1.8" fill="#c4c6c9"/>
<rect x="1060.1" y="83.69999999999999" width="1.8" height="1.8" fill="#c4c6c9"/>
<text x="1056.0" y="97.0" font-size="5.6" fill="#c4c6c9" font-weight="normal" text-anchor="middle" textLength="15.6" lengthAdjust="spacingAndGlyphs" >Group</text>
<g stroke="#c4c6c9" stroke-width="0.8" fill="none"><rect x="1091.6" y="74.4" width="6" height="6"/><rect x="1095" y="78" width="6.4" height="6.6"/></g>
<rect x="1093.8" y="73.0" width="1.6" height="1.6" fill="#c4c6c9"/>
<rect x="1100.6000000000001" y="76.8" width="1.6" height="1.6" fill="#c4c6c9"/>
<rect x="1090.8" y="79.60000000000001" width="1.6" height="1.6" fill="#c4c6c9"/>
<rect x="1100.6000000000001" y="83.8" width="1.6" height="1.6" fill="#c4c6c9"/>
<text x="1096.3" y="97.0" font-size="5.6" fill="#c4c6c9" font-weight="normal" text-anchor="middle" textLength="22.6" lengthAdjust="spacingAndGlyphs" >UnGroup</text>
<g stroke="#54585d" stroke-width="0.8" fill="none"><rect x="1136.6" y="73.6" width="7" height="8.6" rx="0.8"/><rect x="1139" y="76" width="7" height="8.6" rx="0.8" fill="#e1e2e4"/><path d="M1140.8 80.3 h3.4 M1142.5 78.6 v3.4"/></g>
<text x="1141.2" y="97.0" font-size="5.6" fill="#3f4347" font-weight="normal" text-anchor="middle" textLength="26.0" lengthAdjust="spacingAndGlyphs" >Duplicate</text>
<g stroke="#54585d" stroke-width="0.8" fill="none"><path d="M1178.4 76.2 h8 v7.4 a1 1 0 0 1 -1 1 h-6 a1 1 0 0 1 -1 -1 z M1177.4 76.2 h10 M1180.6 76.2 v-1.6 h3.6 v1.6"/><path d="M1181 79 l2.8 2.8 M1183.8 79 l-2.8 2.8" stroke-width="0.6"/></g>
<text x="1182.3" y="97.0" font-size="5.6" fill="#3f4347" font-weight="normal" text-anchor="middle" textLength="17.6" lengthAdjust="spacingAndGlyphs" >Delete</text>
<rect x="1038" y="103" width="151.4" height="47" fill="#e1e2e5" />
<path d="M1044.6 112 h4.2 l-2.1 2.6 z" fill="#222"/>
<text x="1055.5" y="115.9" font-size="8.8" fill="#3e4145" font-weight="normal" text-anchor="start" textLength="21.4" lengthAdjust="spacingAndGlyphs" >Heart</text>
<path d="M1160.6 108.4 l4.8 8.6 h-9.6 z" fill="#f0a020" stroke="#d98b12" stroke-width="0.5" stroke-linejoin="round"/><path d="M1160.6 111.2 v3.2" stroke="#fff" stroke-width="0.9"/><circle cx="1160.6" cy="115.6" r="0.5" fill="#fff"/>
<path d="M1171.4 113 q5 -5.4 10 0 q-5 5.4 -10 0 z" fill="none" stroke="#3c3f43" stroke-width="0.9"/><circle cx="1176.4" cy="113" r="2" fill="#3c3f43"/><circle cx="1175.6" cy="112.2" r="0.6" fill="#fff"/>
<g transform="translate(1064.7 134.8)"><path d="M0 8.4 L-7.6 0.6 Q-10.4 -3.6 -7.6 -6.8 Q-3.2 -10 0 -4.8 Q3.2 -10 7.6 -6.8 Q10.4 -3.6 7.6 0.6 Z" fill="#26402a"/><circle cx="-3.6" cy="-1.6" r="1.7" fill="#d6e3da"/><circle cx="1.4" cy="-0.6" r="1.5" fill="#7e9c88"/><circle cx="-1.6" cy="-5" r="1.5" fill="#9a6a34"/><circle cx="4.4" cy="-4.4" r="1.4" fill="#6f8f7a"/><circle cx="2.4" cy="3.6" r="1.5" fill="#9a6a34"/><circle cx="-5.6" cy="-4.8" r="1" fill="#c8a32c"/><circle cx="-1.6" cy="2.6" r="0.9" fill="#c8a32c"/><circle cx="5.4" cy="-0.6" r="0.9" fill="#c8a32c"/></g>
<text x="1080.7" y="137.6" font-size="7.2" fill="#54585c" font-weight="normal" text-anchor="start" textLength="47.0" lengthAdjust="spacingAndGlyphs" >Print Then Cut</text>
<rect x="1189.4" y="103" width="10.6" height="512" fill="#f1f1f2" />
<path d="M1192.8 110.2 h4.4 l-2.2 -2.6 z" fill="#a8a8a8"/>
<path d="M1192.8 609.4 h4.4 l-2.2 2.6 z" fill="#606060"/>
<rect x="1038" y="615" width="162" height="0.9" fill="#e4e5e7" />
<rect x="1038" y="616" width="162" height="30.6" fill="#f4f5f7" />
<rect x="1044.4" y="620" width="33" height="22.4" rx="1.6" fill="#fff" stroke="#8d8f92" stroke-width="0.9"/>
<text x="1083.8" y="632.8" font-size="5.6" fill="#3e4145" font-weight="normal" text-anchor="start" textLength="37.0" lengthAdjust="spacingAndGlyphs" >Blank Canvas</text>
<rect x="1038" y="646.6" width="162" height="30.4" fill="#dfe0e3" />
<g stroke="#c3c5c8" stroke-width="0.8" fill="none"><rect x="1047.4" y="650.4" width="6" height="6.4" rx="0.8"/><circle cx="1054.6" cy="657" r="3.2" fill="#dfe0e3"/></g>
<text x="1052.0" y="672.8" font-size="5.6" fill="#c3c5c8" font-weight="normal" text-anchor="middle" textLength="12.6" lengthAdjust="spacingAndGlyphs" >Slice</text>
<g stroke="#c3c5c8" stroke-width="0.8" fill="none"><path d="M1076.4 650.4 h6 v3.2 a3.2 3.2 0 1 1 -3.6 3.6 h-2.4 z"/></g>
<text x="1081.0" y="672.8" font-size="5.6" fill="#c3c5c8" font-weight="normal" text-anchor="middle" textLength="12.6" lengthAdjust="spacingAndGlyphs" >Weld</text>
<g stroke="#c3c5c8" stroke-width="0.9" fill="none"><path d="M1108.2 650.6 a2 2 0 0 1 2.8 -0.2 l5.4 6 a2 2 0 0 1 -3 2.6 l-5.4 -6 a1.4 1.4 0 0 1 0.2 -2.4 z"/><path d="M1110.6 653.4 l3.4 3.8"/></g>
<text x="1111.7" y="672.8" font-size="5.6" fill="#c3c5c8" font-weight="normal" text-anchor="middle" textLength="17.0" lengthAdjust="spacingAndGlyphs" >Attach</text>
<g stroke="#c3c5c8" stroke-width="0.8" fill="none"><path d="M1146 649.6 v5.4 M1143.8 653 l2.2 2.2 l2.2 -2.2"/><path d="M1140.6 656.6 l5.4 -1.8 l5.4 1.8 l-5.4 2.4 z"/><path d="M1142 658.6 l4 1.8 l4 -1.8"/></g>
<text x="1146.0" y="672.8" font-size="5.6" fill="#c3c5c8" font-weight="normal" text-anchor="middle" textLength="18.6" lengthAdjust="spacingAndGlyphs" >Flatten</text>
<g stroke="#c3c5c8" stroke-width="0.8" fill="none"><rect x="1176.6" y="650" width="10.6" height="9.8" stroke-dasharray="1.3 1"/><rect x="1179" y="652" width="2.2" height="2.2"/><rect x="1183" y="655.6" width="2.2" height="2.2"/></g>
<text x="1181.7" y="672.8" font-size="5.6" fill="#c3c5c8" font-weight="normal" text-anchor="middle" textLength="21.6" lengthAdjust="spacingAndGlyphs" >Contour</text>
<ellipse cx="77.9" cy="599.7" rx="59.2" ry="46" fill="#c93a1e"/>
<text x="56.4" y="597.8" font-size="25.5" fill="#fff" font-weight="bold" font-style="italic" textLength="39.6" lengthAdjust="spacingAndGlyphs" font-family='"Liberation Serif", serif'>raft</text>
<text x="59.8" y="626.6" font-size="26.5" fill="#fff" font-weight="bold" font-style="italic" textLength="55.4" lengthAdjust="spacingAndGlyphs" font-family='"Liberation Serif", serif'>arah</text>
<text x="102" y="592.2" font-size="9.6" fill="#fff" font-weight="bold" font-style="normal" textLength="24.2" lengthAdjust="spacingAndGlyphs" font-family='"Liberation Serif", serif'>WITH</text>
<g transform="translate(-1.6 0)">
<path d="M57.6 579.2 Q56.6 573.2 51.6 573 Q45.6 574.6 44.4 584 Q43.6 594.6 49 598.6 Q53.6 600.8 58 596.2" fill="none" stroke="#fff" stroke-linecap="round" stroke-linejoin="round" stroke-width="1.5"/>
<path d="M49.6 574.2 Q44.2 577.4 43.9 586.6 Q43.9 594.6 48.2 598.2" fill="none" stroke="#fff" stroke-linecap="round" stroke-linejoin="round" stroke-width="3.6"/>
<circle cx="57" cy="579.2" r="1.7" fill="#fff"/>
<path d="M50.6 573.2 Q42 570.8 36 573.6 Q31.2 577.4 33.6 582.6 Q37 586.6 41 583.2 Q42.6 580.6 40 579.4" fill="none" stroke="#fff" stroke-linecap="round" stroke-linejoin="round" stroke-width="1.2"/>
</g>
<path d="M60.4 604.6 Q59.8 600.8 56 601 Q50 603 50.2 610 Q51.4 615.4 55 620.4 Q57.6 626.6 53 630.8 Q48 633.8 43.2 630.8 Q39.8 627.2 41.8 622.6" fill="none" stroke="#fff" stroke-linecap="round" stroke-linejoin="round" stroke-width="1.5"/>
<path d="M50.6 605.6 Q49.8 611.6 54.2 618.6 Q56.8 623.6 54.4 628.6" fill="none" stroke="#fff" stroke-linecap="round" stroke-linejoin="round" stroke-width="4.2"/>
<circle cx="59.8" cy="604.8" r="1.8" fill="#fff"/>
<path d="M41.8 622.6 Q41.4 615 47.4 612.4 Q53 612 52.4 617.4 Q50.6 624 45 626.6 Q41.2 627.4 40.4 624.4" fill="none" stroke="#fff" stroke-linecap="round" stroke-linejoin="round" stroke-width="1.2"/>
<path d="M54.6 628.6 Q57.6 627.6 60.6 622.6" fill="none" stroke="#fff" stroke-linecap="round" stroke-linejoin="round" stroke-width="1.2"/>
<path d="M81.4 598 Q78.6 605.6 74.4 606.2 Q71.6 605.4 73 602.6" fill="none" stroke="#fff" stroke-linecap="round" stroke-linejoin="round" stroke-width="1.2"/>
<path d="M88.4 580.6 Q90.4 573.4 94 574.2 Q95.4 575.4 94 576.6" fill="none" stroke="#fff" stroke-linecap="round" stroke-linejoin="round" stroke-width="1.3"/>
<path d="M101.4 612.6 Q105.6 604.6 113.4 602.8 Q120.6 602.6 121.6 607.6 Q121 612 116.4 611.8 Q113.6 610.8 114.6 608.4" fill="none" stroke="#fff" stroke-linecap="round" stroke-linejoin="round" stroke-width="1.2"/>
<path d="M102.6 610.2 Q99 603.6 90.6 603 Q83.6 604 83.6 608 Q84.8 611 87.8 610 Q89.2 608.8 88 607.6" fill="none" stroke="#fff" stroke-linecap="round" stroke-linejoin="round" stroke-width="1.1"/>
<path d="M102.6 597.4 Q108 593.4 114.6 595.4 Q121.6 597.6 126.8 593" fill="none" stroke="#fff" stroke-width="2" stroke-linecap="round"/>
<path d="M373.4 288.2 v18.6 l4.2 -4 l3.2 7.4 l2.9 -1.3 l-3.2 -7.2 h6 z" fill="#000" stroke="#fff" stroke-width="1.1" stroke-linejoin="round"/>
</svg>
</body></html>
